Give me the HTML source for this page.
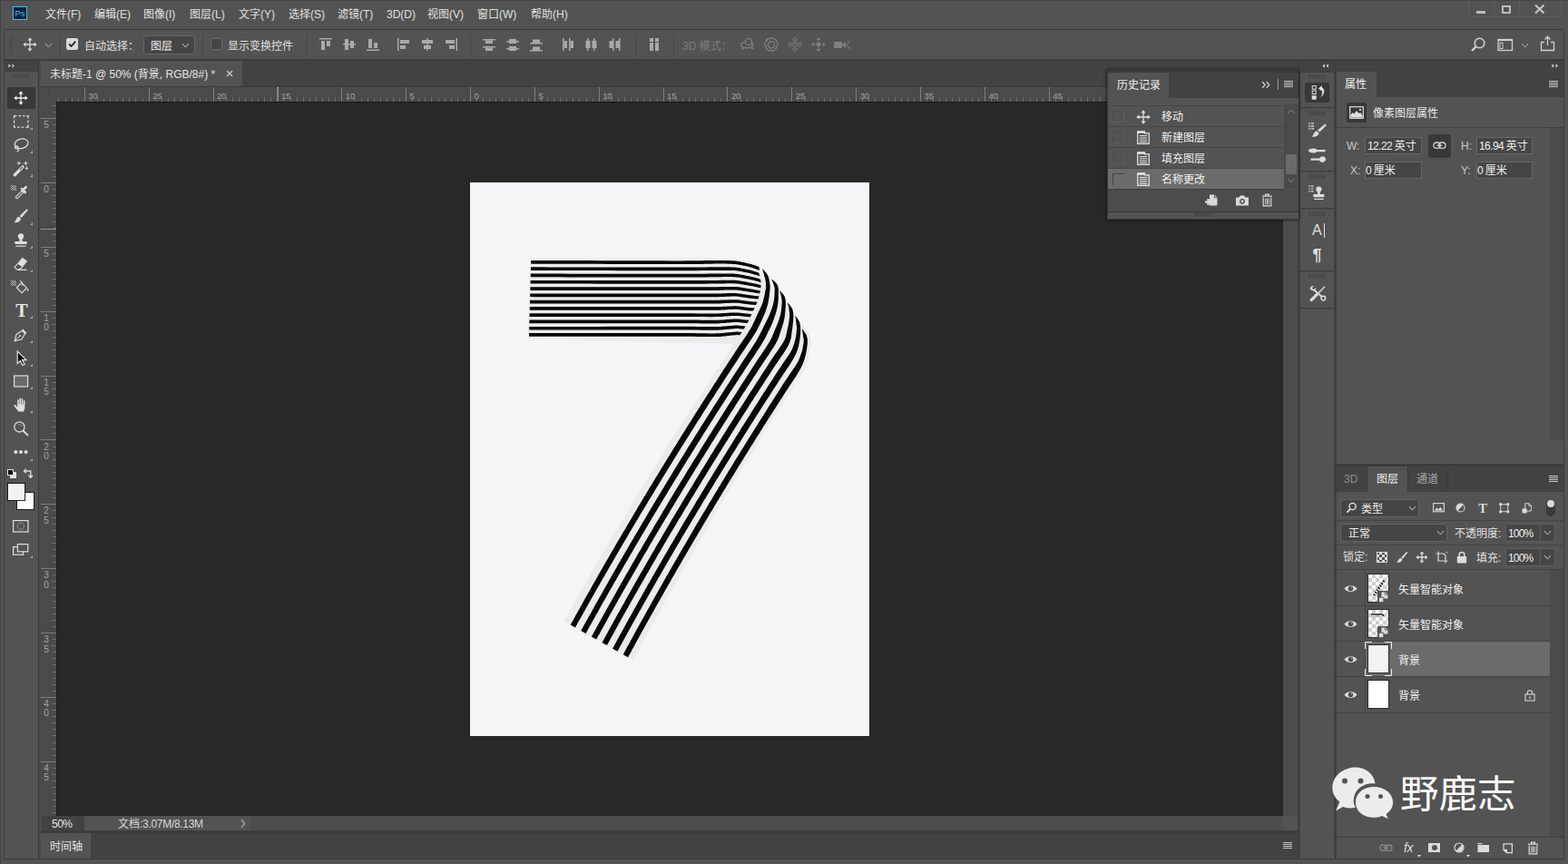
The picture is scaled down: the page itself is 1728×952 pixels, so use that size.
<!DOCTYPE html>
<html lang="zh-CN">
<head>
<meta charset="utf-8">
<title>未标题-1 @ 50% (背景, RGB/8#) *</title>
<style>
html,body{margin:0;padding:0;}
html{background:#535353;}
body{width:1728px;height:952px;position:relative;overflow:hidden;background:#535353;
 font-family:"Liberation Sans","Noto Sans CJK SC",sans-serif;font-size:12px;line-height:16px;color:#dcdcdc;}
.a{position:absolute;}
.t{position:absolute;white-space:nowrap;line-height:16px;height:16px;}
.dim{color:#8c8c8c;}
svg{position:absolute;overflow:visible;}
.mi{position:absolute;top:8px;height:16px;line-height:16px;white-space:nowrap;color:#e0e0e0;}
.inp{position:absolute;background:#454545;border:1px solid #666;box-sizing:border-box;}
.sep{position:absolute;background:#3d3d3d;width:1px;}
.hl{position:absolute;background:#3f3f3f;height:1px;}
</style>
</head>
<body>
<div class="a" style="left:5px;top:32px;width:1718px;height:1px;background:#3a3a3a;"></div>
<div class="a" style="left:5px;top:65px;width:1718px;height:2px;background:#3c3c3c;"></div>
<div class="a" style="left:0px;top:0px;width:1728px;height:1px;background:#454545;"></div>
<div class="a" style="left:0px;top:0px;width:1px;height:952px;background:#4a4040;"></div>
<div class="a" style="left:4px;top:33px;width:1px;height:914px;background:#3e3e3e;"></div>
<div class="a" style="left:5px;top:67px;width:37px;height:12px;background:#424242;"></div>
<div class="a" style="left:42px;top:67px;width:1px;height:880px;background:#3a3a3a;"></div>
<div class="a" style="left:43px;top:67px;width:2px;height:880px;background:#4b4b4b;"></div>
<div class="a" style="left:45px;top:67px;width:1388px;height:29px;background:#424242;"></div>
<div class="a" style="left:45px;top:67px;width:222px;height:28px;background:#535353;"></div>
<div class="a" style="left:45px;top:95px;width:1388px;height:1px;background:#3a3a3a;"></div>
<div class="a" style="left:45px;top:96px;width:1369px;height:16px;background:#4a4a4a;"></div>
<div class="a" style="left:45px;top:112px;width:17px;height:787px;background:#4a4a4a;"></div>
<div class="a" style="left:62px;top:112px;width:1352px;height:787px;background:#282828;"></div>
<div class="a" style="left:62px;top:112px;width:1352px;height:1px;background:#161616;"></div>
<div class="a" style="left:62px;top:112px;width:1px;height:787px;background:#1c1c1c;"></div>
<div class="a" style="left:1414px;top:96px;width:16px;height:803px;background:#4d4d4d;"></div>
<div class="a" style="left:45px;top:899px;width:1385px;height:17px;background:#4d4d4d;"></div>
<div class="a" style="left:46px;top:899px;width:47px;height:17px;background:#424242;"></div>
<div class="a" style="left:93px;top:899px;width:183px;height:17px;background:#535353;"></div>
<div class="a" style="left:1414px;top:899px;width:16px;height:17px;background:#535353;"></div>
<div class="a" style="left:45px;top:915px;width:1385px;height:3px;background:#3c3c3c;"></div>
<div class="a" style="left:45px;top:918px;width:1386px;height:28px;background:#424242;"></div>
<div class="a" style="left:45px;top:918px;width:55px;height:28px;background:#535353;"></div>
<div class="a" style="left:5px;top:946px;width:1718px;height:1px;background:#3a3a3a;"></div>
<div class="a" style="left:1430px;top:67px;width:1px;height:880px;background:#404040;"></div>
<div class="a" style="left:1431px;top:67px;width:1px;height:880px;background:#3a3a3a;"></div>
<div class="a" style="left:1432px;top:67px;width:1px;height:880px;background:#474747;"></div>
<div class="a" style="left:1433px;top:67px;width:290px;height:12px;background:#424242;"></div>
<div class="a" style="left:1433px;top:79px;width:37px;height:867px;background:#535353;"></div>
<div class="a" style="left:1470px;top:67px;width:1px;height:880px;background:#474747;"></div>
<div class="a" style="left:1471px;top:67px;width:1px;height:880px;background:#3a3a3a;"></div>
<div class="a" style="left:1472px;top:67px;width:1px;height:880px;background:#404040;"></div>
<div class="a" style="left:1473px;top:79px;width:250px;height:28px;background:#424242;"></div>
<div class="a" style="left:1473px;top:79px;width:44px;height:28px;background:#535353;"></div>
<div class="a" style="left:1473px;top:107px;width:250px;height:404px;background:#535353;"></div>
<div class="a" style="left:1473px;top:511px;width:250px;height:3px;background:#3c3c3c;"></div>
<div class="a" style="left:1473px;top:514px;width:250px;height:28px;background:#424242;"></div>
<div class="a" style="left:1473px;top:542px;width:250px;height:404px;background:#535353;"></div>
<div class="a" style="left:1723px;top:33px;width:1px;height:914px;background:#3e3e3e;"></div>
<div class="a" style="left:518px;top:201px;width:440px;height:610px;background:#f5f5f7;"></div>
<svg style="left:0;top:0" width="1728" height="952" viewBox="0 0 1728 952">
<g><path d="M584.2,284.6 L790,284.6 Q820,285.1 842,293.6 L846,380 L581.8,373.4 Z" fill="#ececed"/>
<path d="M585.2,290.7 L590.9,290.8 L598.3,290.8 L607.1,290.8 L617.0,290.8 L627.5,290.8 L638.5,290.8 L649.4,290.8 L660.0,290.8 L670.9,290.9 L682.6,290.9 L694.9,290.9 L707.3,291.0 L719.4,291.0 L730.8,291.0 L741.1,291.1 L750.0,291.0 L757.4,291.0 L763.7,291.0 L769.1,290.9 L773.7,290.9 L777.8,290.8 L781.4,290.7 L784.7,290.7 L788.0,290.6 L791.0,290.6 L793.5,290.6 L795.6,290.6 L797.3,290.6 L798.8,290.6 L800.2,290.6 L801.5,290.7 L802.9,290.7 L804.4,290.7 L805.6,290.8 L806.8,290.8 L807.8,290.9 L808.8,290.9 L809.8,291.0 L810.8,291.1 L811.8,291.2 L812.8,291.4 L813.8,291.5 L814.8,291.7 L815.7,291.9 L816.7,292.1 L817.7,292.3 L818.6,292.5 L819.6,292.7 L820.6,292.9 L821.6,293.1 L822.6,293.3 L823.5,293.5 L824.5,293.7 L825.4,293.9 L826.4,294.2 L827.5,294.5 L828.6,294.9 L829.9,295.3 L831.1,295.7 L832.4,296.2 L833.7,296.7 L835.0,297.2 L836.2,297.6 L837.4,298.1 L838.5,298.6 L839.6,299.1 L840.8,299.7 L841.9,300.2 L842.9,300.7 L843.9,301.2 L844.7,301.6 L845.3,301.9 L846.7,299.1 L846.1,298.8 L845.3,298.4 L844.4,297.9 L843.4,297.3 L842.2,296.8 L841.0,296.2 L839.8,295.6 L838.6,295.1 L837.5,294.6 L836.2,294.1 L834.9,293.6 L833.6,293.1 L832.3,292.6 L831.0,292.1 L829.7,291.7 L828.5,291.3 L827.4,291.0 L826.3,290.7 L825.2,290.4 L824.2,290.2 L823.3,289.9 L822.3,289.7 L821.3,289.5 L820.4,289.3 L819.4,289.1 L818.4,288.9 L817.4,288.7 L816.4,288.5 L815.4,288.3 L814.4,288.1 L813.3,287.9 L812.2,287.8 L811.2,287.6 L810.1,287.5 L809.1,287.4 L808.1,287.3 L807.0,287.3 L805.8,287.2 L804.5,287.2 L803.1,287.1 L801.6,287.1 L800.2,287.0 L798.9,287.0 L797.3,287.0 L795.6,287.0 L793.5,286.9 L791.0,286.9 L788.0,287.0 L784.7,287.0 L781.3,287.0 L777.7,287.1 L773.7,287.2 L769.0,287.2 L763.7,287.3 L757.4,287.3 L750.0,287.4 L741.1,287.4 L730.8,287.3 L719.4,287.3 L707.3,287.3 L694.9,287.2 L682.7,287.2 L670.9,287.2 L660.0,287.2 L649.4,287.1 L638.5,287.1 L627.6,287.1 L617.0,287.1 L607.1,287.1 L598.3,287.1 L590.9,287.1 L585.2,287.1Z" fill="#070707"/>
<path d="M585.0,298.0 L590.7,298.0 L598.1,298.0 L607.0,298.1 L616.9,298.1 L627.5,298.1 L638.4,298.1 L649.4,298.1 L660.0,298.1 L670.9,298.1 L682.7,298.2 L694.9,298.2 L707.3,298.2 L719.4,298.3 L730.8,298.3 L741.1,298.3 L750.0,298.3 L757.4,298.3 L763.7,298.2 L769.1,298.2 L773.7,298.1 L777.7,298.1 L781.4,298.0 L784.7,298.0 L788.0,298.0 L791.0,297.9 L793.5,297.9 L795.6,297.9 L797.3,297.9 L798.8,297.9 L800.2,297.9 L801.5,297.9 L803.0,297.9 L804.4,297.9 L805.6,297.9 L806.8,298.0 L807.8,298.0 L808.8,298.1 L809.8,298.1 L810.8,298.2 L811.8,298.3 L812.8,298.4 L813.8,298.6 L814.8,298.7 L815.7,298.9 L816.7,299.1 L817.7,299.3 L818.7,299.5 L819.7,299.7 L820.7,299.9 L821.6,300.1 L822.6,300.2 L823.5,300.4 L824.5,300.6 L825.5,300.8 L826.5,301.1 L827.6,301.4 L828.7,301.7 L829.9,302.0 L831.2,302.4 L832.5,302.8 L833.8,303.2 L835.1,303.6 L836.3,304.1 L837.4,304.5 L838.5,304.9 L839.7,305.4 L840.8,305.9 L841.9,306.4 L843.0,306.9 L843.9,307.3 L844.7,307.7 L845.3,308.0 L846.7,305.0 L846.1,304.8 L845.3,304.4 L844.4,304.0 L843.3,303.5 L842.2,302.9 L841.0,302.4 L839.8,301.9 L838.6,301.4 L837.4,301.0 L836.1,300.5 L834.8,300.1 L833.5,299.7 L832.2,299.2 L830.9,298.8 L829.6,298.5 L828.4,298.1 L827.3,297.8 L826.2,297.6 L825.2,297.3 L824.2,297.1 L823.2,296.9 L822.3,296.7 L821.3,296.5 L820.3,296.3 L819.3,296.1 L818.4,295.9 L817.4,295.7 L816.4,295.5 L815.4,295.3 L814.3,295.1 L813.3,295.0 L812.2,294.8 L811.1,294.7 L810.1,294.6 L809.1,294.5 L808.0,294.5 L806.9,294.4 L805.7,294.4 L804.5,294.3 L803.0,294.3 L801.6,294.3 L800.2,294.3 L798.8,294.2 L797.3,294.2 L795.6,294.2 L793.5,294.2 L791.0,294.2 L788.0,294.3 L784.7,294.3 L781.3,294.3 L777.7,294.4 L773.7,294.4 L769.1,294.5 L763.7,294.5 L757.4,294.6 L750.0,294.6 L741.1,294.6 L730.8,294.6 L719.4,294.6 L707.3,294.5 L694.9,294.5 L682.7,294.5 L670.9,294.4 L660.0,294.4 L649.4,294.4 L638.4,294.4 L627.5,294.4 L616.9,294.4 L607.0,294.4 L598.1,294.3 L590.7,294.3 L585.0,294.3Z" fill="#070707"/>
<path d="M584.8,305.3 L590.5,305.3 L598.0,305.3 L606.8,305.3 L616.8,305.3 L627.4,305.4 L638.4,305.4 L649.4,305.4 L660.0,305.4 L670.9,305.4 L682.7,305.4 L694.9,305.5 L707.3,305.5 L719.4,305.5 L730.8,305.5 L741.1,305.5 L750.0,305.5 L757.4,305.5 L763.7,305.5 L769.1,305.5 L773.7,305.4 L777.7,305.4 L781.4,305.3 L784.7,305.3 L788.0,305.3 L791.0,305.2 L793.5,305.2 L795.6,305.2 L797.3,305.1 L798.8,305.1 L800.2,305.1 L801.6,305.1 L803.0,305.1 L804.4,305.1 L805.7,305.1 L806.8,305.1 L807.9,305.2 L808.9,305.2 L809.8,305.2 L810.8,305.3 L811.8,305.4 L812.8,305.5 L813.8,305.6 L814.8,305.8 L815.8,306.0 L816.7,306.1 L817.7,306.3 L818.7,306.5 L819.7,306.7 L820.7,306.9 L821.6,307.0 L822.6,307.2 L823.6,307.4 L824.5,307.6 L825.5,307.8 L826.5,308.0 L827.6,308.2 L828.8,308.5 L830.0,308.8 L831.3,309.1 L832.6,309.5 L833.9,309.8 L835.1,310.1 L836.4,310.5 L837.5,310.9 L838.6,311.2 L839.7,311.7 L840.9,312.1 L842.0,312.6 L843.0,313.0 L844.0,313.4 L844.8,313.7 L845.4,314.0 L846.6,311.0 L846.0,310.8 L845.2,310.4 L844.3,310.0 L843.2,309.6 L842.1,309.1 L840.9,308.6 L839.7,308.2 L838.5,307.7 L837.3,307.4 L836.1,307.0 L834.7,306.6 L833.4,306.2 L832.1,305.9 L830.8,305.6 L829.6,305.3 L828.4,305.0 L827.3,304.7 L826.2,304.5 L825.2,304.2 L824.2,304.0 L823.2,303.9 L822.3,303.7 L821.3,303.5 L820.3,303.3 L819.3,303.1 L818.3,302.9 L817.4,302.7 L816.4,302.5 L815.4,302.4 L814.3,302.2 L813.3,302.0 L812.2,301.9 L811.1,301.8 L810.1,301.7 L809.1,301.7 L808.0,301.6 L806.9,301.6 L805.7,301.6 L804.4,301.5 L803.0,301.5 L801.6,301.5 L800.2,301.5 L798.8,301.5 L797.3,301.5 L795.6,301.5 L793.5,301.5 L791.0,301.5 L788.0,301.6 L784.7,301.6 L781.3,301.6 L777.7,301.7 L773.7,301.7 L769.1,301.8 L763.7,301.8 L757.4,301.8 L750.0,301.8 L741.1,301.8 L730.8,301.8 L719.4,301.8 L707.3,301.8 L695.0,301.8 L682.7,301.7 L670.9,301.7 L660.0,301.7 L649.4,301.7 L638.4,301.7 L627.4,301.7 L616.8,301.6 L606.8,301.6 L598.0,301.6 L590.5,301.6 L584.8,301.6Z" fill="#070707"/>
<path d="M584.6,312.6 L590.3,312.6 L597.8,312.6 L606.7,312.6 L616.7,312.6 L627.3,312.6 L638.4,312.6 L649.4,312.6 L660.0,312.7 L670.9,312.7 L682.7,312.7 L695.0,312.7 L707.3,312.7 L719.4,312.7 L730.8,312.8 L741.1,312.8 L750.0,312.8 L757.4,312.8 L763.7,312.7 L769.1,312.7 L773.7,312.7 L777.7,312.7 L781.4,312.6 L784.7,312.6 L788.0,312.6 L791.0,312.5 L793.5,312.5 L795.6,312.5 L797.4,312.4 L798.9,312.4 L800.2,312.3 L801.6,312.3 L803.0,312.3 L804.4,312.3 L805.7,312.3 L806.8,312.3 L807.9,312.3 L808.9,312.3 L809.9,312.4 L810.8,312.4 L811.8,312.5 L812.8,312.6 L813.8,312.7 L814.8,312.8 L815.8,313.0 L816.7,313.2 L817.7,313.3 L818.7,313.5 L819.7,313.7 L820.7,313.9 L821.7,314.0 L822.6,314.2 L823.6,314.3 L824.5,314.5 L825.5,314.7 L826.6,314.9 L827.7,315.1 L828.8,315.3 L830.1,315.6 L831.4,315.8 L832.7,316.1 L834.0,316.4 L835.2,316.6 L836.4,316.9 L837.6,317.2 L838.7,317.5 L839.8,317.9 L840.9,318.3 L842.1,318.7 L843.1,319.1 L844.0,319.5 L844.8,319.8 L845.4,320.0 L846.6,317.0 L846.0,316.8 L845.2,316.5 L844.2,316.1 L843.2,315.7 L842.0,315.3 L840.9,314.8 L839.6,314.4 L838.4,314.1 L837.2,313.7 L836.0,313.4 L834.7,313.1 L833.3,312.8 L832.0,312.6 L830.7,312.3 L829.5,312.0 L828.3,311.8 L827.2,311.6 L826.2,311.4 L825.2,311.2 L824.2,311.0 L823.2,310.8 L822.2,310.6 L821.3,310.5 L820.3,310.3 L819.3,310.1 L818.3,310.0 L817.4,309.8 L816.4,309.6 L815.3,309.4 L814.3,309.3 L813.2,309.1 L812.2,309.0 L811.1,308.9 L810.1,308.8 L809.0,308.8 L808.0,308.8 L806.9,308.7 L805.7,308.7 L804.4,308.7 L803.0,308.7 L801.6,308.7 L800.2,308.7 L798.8,308.7 L797.3,308.8 L795.5,308.8 L793.5,308.8 L791.0,308.9 L788.0,308.9 L784.7,308.9 L781.3,308.9 L777.7,309.0 L773.7,309.0 L769.1,309.0 L763.7,309.0 L757.4,309.1 L750.0,309.1 L741.1,309.1 L730.8,309.1 L719.4,309.0 L707.3,309.0 L695.0,309.0 L682.7,309.0 L670.9,309.0 L660.0,309.0 L649.4,308.9 L638.4,308.9 L627.3,308.9 L616.7,308.9 L606.7,308.9 L597.8,308.9 L590.3,308.9 L584.6,308.9Z" fill="#070707"/>
<path d="M584.4,319.9 L590.1,319.9 L597.6,319.9 L606.6,319.9 L616.6,319.9 L627.3,319.9 L638.3,319.9 L649.3,319.9 L660.0,319.9 L670.9,319.9 L682.7,320.0 L695.0,320.0 L707.3,320.0 L719.4,320.0 L730.8,320.0 L741.1,320.0 L750.0,320.0 L757.4,320.0 L763.7,320.0 L769.1,320.0 L773.7,320.0 L777.7,320.0 L781.3,319.9 L784.7,319.9 L788.0,319.9 L791.0,319.9 L793.5,319.8 L795.6,319.7 L797.4,319.7 L798.9,319.6 L800.3,319.6 L801.6,319.5 L803.0,319.5 L804.4,319.5 L805.7,319.5 L806.9,319.4 L807.9,319.4 L808.9,319.4 L809.9,319.5 L810.9,319.5 L811.9,319.6 L812.9,319.7 L813.8,319.8 L814.8,319.9 L815.8,320.0 L816.8,320.2 L817.7,320.4 L818.7,320.5 L819.7,320.7 L820.7,320.8 L821.7,321.0 L822.6,321.1 L823.6,321.3 L824.6,321.4 L825.6,321.6 L826.6,321.8 L827.7,322.0 L828.9,322.1 L830.2,322.3 L831.4,322.5 L832.7,322.7 L834.0,322.9 L835.3,323.1 L836.5,323.4 L837.6,323.6 L838.7,323.9 L839.9,324.2 L841.0,324.5 L842.1,324.9 L843.2,325.2 L844.1,325.6 L844.9,325.8 L845.5,326.0 L846.5,323.0 L845.9,322.8 L845.1,322.5 L844.2,322.2 L843.1,321.8 L842.0,321.4 L840.8,321.1 L839.6,320.7 L838.4,320.4 L837.2,320.1 L835.9,319.9 L834.6,319.7 L833.3,319.4 L831.9,319.2 L830.7,319.0 L829.4,318.8 L828.3,318.6 L827.2,318.5 L826.1,318.3 L825.1,318.1 L824.1,317.9 L823.2,317.8 L822.2,317.6 L821.3,317.5 L820.3,317.3 L819.3,317.1 L818.3,317.0 L817.3,316.8 L816.3,316.6 L815.3,316.5 L814.3,316.3 L813.2,316.2 L812.1,316.1 L811.1,316.0 L810.0,315.9 L809.0,315.9 L807.9,315.9 L806.9,315.9 L805.7,315.9 L804.4,315.9 L803.0,315.9 L801.5,315.9 L800.2,316.0 L798.8,316.0 L797.3,316.0 L795.5,316.1 L793.5,316.1 L791.0,316.2 L788.0,316.2 L784.7,316.2 L781.3,316.2 L777.7,316.3 L773.7,316.3 L769.1,316.3 L763.7,316.3 L757.4,316.3 L750.0,316.3 L741.1,316.3 L730.8,316.3 L719.4,316.3 L707.4,316.3 L695.0,316.3 L682.7,316.3 L670.9,316.2 L660.0,316.2 L649.3,316.2 L638.3,316.2 L627.3,316.2 L616.6,316.2 L606.6,316.2 L597.6,316.2 L590.1,316.2 L584.4,316.2Z" fill="#070707"/>
<path d="M584.2,327.1 L589.9,327.2 L597.5,327.2 L606.4,327.2 L616.5,327.2 L627.2,327.2 L638.3,327.2 L649.3,327.2 L660.0,327.2 L670.9,327.2 L682.7,327.2 L695.0,327.2 L707.4,327.2 L719.4,327.2 L730.8,327.2 L741.1,327.2 L750.0,327.2 L757.4,327.3 L763.7,327.3 L769.1,327.3 L773.7,327.3 L777.7,327.3 L781.3,327.2 L784.7,327.2 L788.0,327.2 L791.0,327.2 L793.6,327.1 L795.6,327.0 L797.4,326.9 L798.9,326.9 L800.3,326.8 L801.6,326.7 L803.0,326.7 L804.5,326.7 L805.7,326.6 L806.9,326.6 L808.0,326.6 L809.0,326.6 L809.9,326.6 L810.9,326.6 L811.9,326.6 L812.9,326.7 L813.9,326.8 L814.8,327.0 L815.8,327.1 L816.8,327.2 L817.7,327.4 L818.7,327.6 L819.8,327.7 L820.7,327.8 L821.7,328.0 L822.7,328.1 L823.6,328.2 L824.6,328.4 L825.6,328.5 L826.7,328.7 L827.8,328.8 L829.0,329.0 L830.2,329.1 L831.5,329.2 L832.8,329.3 L834.1,329.5 L835.4,329.6 L836.6,329.8 L837.7,330.0 L838.8,330.2 L839.9,330.4 L841.1,330.7 L842.2,331.1 L843.2,331.4 L844.1,331.6 L844.9,331.9 L845.6,332.0 L846.4,329.0 L845.8,328.8 L845.1,328.6 L844.1,328.3 L843.1,327.9 L841.9,327.6 L840.7,327.3 L839.5,327.0 L838.3,326.7 L837.1,326.5 L835.8,326.3 L834.5,326.2 L833.2,326.0 L831.9,325.9 L830.6,325.8 L829.4,325.6 L828.2,325.5 L827.1,325.3 L826.1,325.2 L825.1,325.0 L824.1,324.9 L823.2,324.7 L822.2,324.6 L821.2,324.4 L820.2,324.3 L819.3,324.2 L818.3,324.0 L817.3,323.8 L816.3,323.7 L815.3,323.5 L814.3,323.4 L813.2,323.2 L812.1,323.2 L811.0,323.1 L810.0,323.1 L809.0,323.0 L807.9,323.0 L806.8,323.0 L805.7,323.1 L804.4,323.1 L803.0,323.1 L801.5,323.1 L800.1,323.2 L798.7,323.2 L797.2,323.3 L795.5,323.4 L793.5,323.4 L791.0,323.5 L788.0,323.5 L784.7,323.5 L781.3,323.5 L777.7,323.6 L773.7,323.6 L769.1,323.6 L763.7,323.6 L757.4,323.6 L750.0,323.6 L741.1,323.5 L730.8,323.5 L719.4,323.5 L707.4,323.5 L695.0,323.5 L682.7,323.5 L670.9,323.5 L660.0,323.5 L649.3,323.5 L638.3,323.5 L627.2,323.5 L616.5,323.5 L606.5,323.5 L597.5,323.5 L590.0,323.5 L584.2,323.5Z" fill="#070707"/>
<path d="M584.0,334.4 L589.8,334.4 L597.3,334.4 L606.3,334.4 L616.4,334.4 L627.1,334.5 L638.2,334.5 L649.3,334.5 L660.0,334.5 L670.9,334.5 L682.7,334.5 L695.0,334.5 L707.4,334.5 L719.4,334.5 L730.8,334.5 L741.1,334.5 L750.0,334.5 L757.4,334.5 L763.7,334.5 L769.1,334.5 L773.7,334.5 L777.7,334.5 L781.3,334.5 L784.7,334.5 L788.0,334.5 L791.1,334.5 L793.6,334.4 L795.7,334.3 L797.4,334.2 L798.9,334.1 L800.3,334.0 L801.6,333.9 L803.1,333.9 L804.5,333.8 L805.8,333.8 L806.9,333.7 L808.0,333.7 L809.0,333.7 L809.9,333.7 L810.9,333.7 L811.9,333.7 L812.9,333.8 L813.9,333.9 L814.8,334.0 L815.8,334.1 L816.8,334.3 L817.8,334.4 L818.8,334.6 L819.8,334.7 L820.8,334.8 L821.7,335.0 L822.7,335.1 L823.7,335.2 L824.6,335.3 L825.7,335.4 L826.7,335.6 L827.8,335.7 L829.0,335.8 L830.3,335.8 L831.6,335.9 L832.9,336.0 L834.2,336.0 L835.5,336.1 L836.7,336.2 L837.8,336.3 L838.9,336.5 L840.0,336.7 L841.1,337.0 L842.2,337.2 L843.3,337.5 L844.2,337.7 L845.0,337.9 L845.6,338.1 L846.4,334.9 L845.8,334.8 L845.0,334.6 L844.1,334.3 L843.0,334.1 L841.9,333.8 L840.7,333.5 L839.4,333.3 L838.2,333.1 L837.0,332.9 L835.7,332.8 L834.4,332.7 L833.1,332.6 L831.8,332.6 L830.5,332.5 L829.3,332.4 L828.2,332.3 L827.1,332.2 L826.1,332.1 L825.1,332.0 L824.1,331.8 L823.1,331.7 L822.2,331.6 L821.2,331.4 L820.2,331.3 L819.2,331.2 L818.3,331.0 L817.3,330.9 L816.3,330.7 L815.3,330.6 L814.3,330.4 L813.2,330.3 L812.1,330.2 L811.0,330.2 L810.0,330.2 L808.9,330.2 L807.9,330.2 L806.8,330.2 L805.6,330.2 L804.4,330.3 L802.9,330.3 L801.5,330.4 L800.1,330.4 L798.7,330.5 L797.2,330.6 L795.5,330.6 L793.5,330.7 L791.0,330.8 L788.0,330.8 L784.7,330.8 L781.3,330.8 L777.7,330.8 L773.7,330.8 L769.1,330.8 L763.7,330.8 L757.4,330.8 L750.0,330.8 L741.1,330.8 L730.8,330.8 L719.4,330.8 L707.4,330.8 L695.0,330.8 L682.7,330.8 L670.9,330.8 L660.0,330.8 L649.3,330.8 L638.2,330.8 L627.1,330.8 L616.4,330.7 L606.3,330.7 L597.3,330.7 L589.8,330.7 L584.0,330.7Z" fill="#070707"/>
<path d="M583.8,341.7 L589.6,341.7 L597.2,341.7 L606.2,341.7 L616.3,341.7 L627.1,341.7 L638.2,341.7 L649.3,341.7 L660.0,341.7 L670.9,341.7 L682.7,341.7 L695.0,341.7 L707.4,341.7 L719.5,341.7 L730.8,341.7 L741.1,341.7 L750.0,341.7 L757.4,341.7 L763.7,341.8 L769.1,341.8 L773.7,341.8 L777.7,341.8 L781.3,341.8 L784.7,341.8 L788.0,341.8 L791.1,341.8 L793.6,341.7 L795.7,341.6 L797.4,341.5 L799.0,341.4 L800.3,341.3 L801.7,341.2 L803.1,341.1 L804.5,341.0 L805.8,341.0 L806.9,340.9 L808.0,340.8 L809.0,340.8 L810.0,340.8 L810.9,340.8 L811.9,340.8 L812.9,340.9 L813.9,340.9 L814.9,341.1 L815.8,341.2 L816.8,341.3 L817.8,341.5 L818.8,341.6 L819.8,341.7 L820.8,341.8 L821.7,341.9 L822.7,342.0 L823.7,342.2 L824.7,342.3 L825.7,342.4 L826.8,342.5 L827.9,342.5 L829.1,342.6 L830.4,342.6 L831.7,342.6 L833.0,342.6 L834.3,342.6 L835.6,342.6 L836.7,342.6 L837.9,342.7 L838.9,342.8 L840.1,343.0 L841.2,343.2 L842.3,343.4 L843.3,343.6 L844.3,343.8 L845.1,343.9 L845.7,344.1 L846.3,340.9 L845.7,340.8 L844.9,340.6 L844.0,340.4 L842.9,340.2 L841.8,340.0 L840.6,339.8 L839.4,339.6 L838.1,339.4 L836.9,339.3 L835.6,339.3 L834.3,339.3 L833.0,339.3 L831.7,339.3 L830.4,339.2 L829.2,339.2 L828.1,339.2 L827.0,339.1 L826.0,339.0 L825.0,338.9 L824.1,338.8 L823.1,338.7 L822.2,338.5 L821.2,338.4 L820.2,338.3 L819.2,338.2 L818.3,338.0 L817.3,337.9 L816.3,337.7 L815.3,337.6 L814.2,337.5 L813.2,337.4 L812.1,337.3 L811.0,337.3 L809.9,337.3 L808.9,337.3 L807.9,337.3 L806.8,337.4 L805.6,337.4 L804.3,337.5 L802.9,337.5 L801.5,337.6 L800.1,337.7 L798.7,337.7 L797.2,337.8 L795.5,337.9 L793.4,338.0 L791.0,338.1 L788.0,338.1 L784.7,338.1 L781.3,338.1 L777.7,338.1 L773.7,338.1 L769.1,338.1 L763.7,338.1 L757.4,338.0 L750.0,338.0 L741.1,338.0 L730.8,338.0 L719.5,338.0 L707.4,338.0 L695.0,338.0 L682.7,338.0 L670.9,338.0 L660.0,338.0 L649.3,338.0 L638.2,338.0 L627.1,338.0 L616.3,338.0 L606.2,338.0 L597.2,338.0 L589.6,338.0 L583.8,338.0Z" fill="#070707"/>
<path d="M583.6,349.0 L589.4,349.0 L597.0,349.0 L606.1,349.0 L616.2,349.0 L627.0,349.0 L638.2,349.0 L649.3,349.0 L660.0,349.0 L671.0,349.0 L682.8,349.0 L695.0,349.0 L707.4,349.0 L719.5,349.0 L730.8,349.0 L741.1,349.0 L750.0,349.0 L757.4,349.0 L763.7,349.0 L769.1,349.1 L773.7,349.1 L777.7,349.1 L781.3,349.2 L784.7,349.2 L788.0,349.1 L791.1,349.1 L793.6,349.0 L795.7,348.9 L797.4,348.7 L799.0,348.6 L800.4,348.5 L801.7,348.4 L803.1,348.3 L804.5,348.2 L805.8,348.1 L807.0,348.1 L808.0,348.0 L809.0,347.9 L810.0,347.9 L811.0,347.9 L811.9,347.9 L812.9,347.9 L813.9,348.0 L814.9,348.1 L815.8,348.2 L816.8,348.3 L817.8,348.5 L818.8,348.6 L819.8,348.7 L820.8,348.8 L821.8,348.9 L822.7,349.0 L823.7,349.1 L824.7,349.2 L825.7,349.3 L826.8,349.3 L828.0,349.4 L829.2,349.4 L830.5,349.3 L831.8,349.3 L833.1,349.2 L834.4,349.1 L835.6,349.0 L836.8,349.0 L837.9,349.0 L839.0,349.1 L840.1,349.2 L841.3,349.4 L842.4,349.5 L843.4,349.7 L844.3,349.9 L845.1,350.0 L845.8,350.1 L846.2,346.9 L845.7,346.8 L844.9,346.7 L843.9,346.5 L842.9,346.3 L841.7,346.2 L840.5,346.0 L839.3,345.9 L838.1,345.8 L836.8,345.7 L835.5,345.8 L834.2,345.8 L832.9,345.9 L831.6,345.9 L830.3,346.0 L829.1,346.0 L828.0,346.0 L827.0,346.0 L826.0,345.9 L825.0,345.8 L824.0,345.7 L823.1,345.6 L822.1,345.5 L821.2,345.4 L820.2,345.3 L819.2,345.2 L818.2,345.1 L817.3,344.9 L816.3,344.8 L815.3,344.7 L814.2,344.5 L813.2,344.4 L812.1,344.4 L811.0,344.4 L809.9,344.4 L808.9,344.4 L807.8,344.5 L806.8,344.5 L805.6,344.6 L804.3,344.6 L802.9,344.7 L801.4,344.8 L800.1,344.9 L798.7,345.0 L797.2,345.1 L795.5,345.2 L793.4,345.3 L791.0,345.4 L788.0,345.4 L784.7,345.5 L781.3,345.5 L777.7,345.4 L773.7,345.4 L769.1,345.4 L763.7,345.3 L757.4,345.3 L750.0,345.3 L741.1,345.3 L730.8,345.3 L719.5,345.3 L707.4,345.3 L695.0,345.3 L682.8,345.3 L671.0,345.3 L660.0,345.3 L649.3,345.3 L638.2,345.3 L627.0,345.3 L616.2,345.3 L606.1,345.3 L597.0,345.3 L589.4,345.3 L583.6,345.3Z" fill="#070707"/>
<path d="M583.4,356.3 L589.2,356.3 L596.8,356.3 L605.9,356.3 L616.1,356.3 L626.9,356.3 L638.1,356.3 L649.3,356.3 L660.0,356.3 L671.0,356.3 L682.8,356.3 L695.1,356.2 L707.4,356.2 L719.5,356.2 L730.8,356.2 L741.1,356.2 L750.0,356.2 L757.4,356.2 L763.7,356.3 L769.1,356.3 L773.7,356.4 L777.7,356.4 L781.3,356.5 L784.7,356.5 L788.0,356.4 L791.1,356.4 L793.6,356.3 L795.7,356.1 L797.5,356.0 L799.0,355.9 L800.4,355.7 L801.7,355.6 L803.1,355.5 L804.5,355.4 L805.8,355.3 L807.0,355.2 L808.1,355.1 L809.1,355.1 L810.0,355.0 L811.0,355.0 L812.0,355.0 L813.0,355.0 L813.9,355.1 L814.9,355.2 L815.9,355.3 L816.8,355.4 L817.8,355.5 L818.8,355.6 L819.8,355.7 L820.8,355.8 L821.8,355.9 L822.7,356.0 L823.7,356.1 L824.7,356.1 L825.8,356.2 L826.9,356.2 L828.0,356.2 L829.3,356.2 L830.6,356.1 L831.9,355.9 L833.2,355.8 L834.5,355.6 L835.7,355.5 L836.9,355.4 L838.0,355.4 L839.1,355.4 L840.2,355.5 L841.3,355.6 L842.4,355.7 L843.5,355.8 L844.4,355.9 L845.2,356.0 L845.8,356.1 L846.2,352.9 L845.6,352.8 L844.8,352.7 L843.9,352.6 L842.8,352.5 L841.7,352.3 L840.4,352.2 L839.2,352.1 L838.0,352.1 L836.7,352.1 L835.5,352.2 L834.1,352.4 L832.8,352.5 L831.5,352.6 L830.3,352.7 L829.1,352.8 L828.0,352.9 L826.9,352.9 L825.9,352.8 L825.0,352.8 L824.0,352.7 L823.1,352.6 L822.1,352.5 L821.1,352.4 L820.2,352.3 L819.2,352.2 L818.2,352.1 L817.3,352.0 L816.3,351.8 L815.3,351.7 L814.2,351.6 L813.1,351.5 L812.0,351.5 L810.9,351.5 L809.9,351.5 L808.9,351.5 L807.8,351.6 L806.7,351.7 L805.6,351.7 L804.3,351.8 L802.9,351.9 L801.4,352.0 L800.0,352.1 L798.7,352.3 L797.2,352.4 L795.5,352.5 L793.4,352.6 L791.0,352.7 L788.0,352.7 L784.7,352.8 L781.3,352.8 L777.7,352.7 L773.7,352.7 L769.1,352.6 L763.7,352.6 L757.4,352.5 L750.0,352.5 L741.1,352.5 L730.8,352.5 L719.5,352.5 L707.4,352.5 L695.1,352.5 L682.8,352.6 L671.0,352.6 L660.0,352.6 L649.3,352.6 L638.1,352.6 L626.9,352.6 L616.1,352.6 L605.9,352.6 L596.9,352.6 L589.2,352.6 L583.4,352.6Z" fill="#070707"/>
<path d="M583.2,363.5 L589.0,363.6 L596.7,363.6 L605.8,363.6 L616.0,363.6 L626.9,363.6 L638.1,363.6 L649.2,363.6 L660.0,363.5 L671.0,363.5 L682.8,363.5 L695.1,363.5 L707.4,363.5 L719.5,363.5 L730.8,363.4 L741.1,363.4 L750.0,363.4 L757.4,363.5 L763.7,363.5 L769.0,363.6 L773.7,363.7 L777.7,363.7 L781.3,363.8 L784.7,363.8 L788.0,363.7 L791.1,363.7 L793.6,363.6 L795.7,363.4 L797.5,363.3 L799.0,363.1 L800.4,362.9 L801.7,362.8 L803.1,362.7 L804.6,362.6 L805.8,362.5 L807.0,362.4 L808.1,362.3 L809.1,362.2 L810.1,362.1 L811.0,362.1 L812.0,362.1 L813.0,362.1 L813.9,362.1 L814.9,362.2 L815.9,362.3 L816.8,362.4 L817.8,362.5 L818.8,362.6 L819.9,362.7 L820.8,362.8 L821.8,362.9 L822.8,362.9 L823.8,363.0 L824.8,363.1 L825.8,363.1 L826.9,363.1 L828.1,363.1 L829.3,363.0 L830.6,362.8 L831.9,362.6 L833.3,362.4 L834.6,362.2 L835.8,362.0 L837.0,361.8 L838.1,361.7 L839.2,361.7 L840.3,361.7 L841.4,361.8 L842.5,361.8 L843.5,361.9 L844.5,362.0 L845.3,362.1 L845.9,362.1 L846.1,358.9 L845.5,358.9 L844.8,358.8 L843.8,358.7 L842.7,358.6 L841.6,358.5 L840.4,358.5 L839.1,358.4 L837.9,358.5 L836.7,358.6 L835.4,358.7 L834.1,358.9 L832.7,359.1 L831.4,359.3 L830.2,359.5 L829.0,359.6 L827.9,359.7 L826.9,359.7 L825.9,359.7 L824.9,359.7 L824.0,359.6 L823.1,359.5 L822.1,359.5 L821.1,359.4 L820.1,359.3 L819.2,359.2 L818.2,359.1 L817.2,359.0 L816.3,358.9 L815.2,358.8 L814.2,358.7 L813.1,358.6 L812.0,358.5 L810.9,358.6 L809.9,358.6 L808.8,358.7 L807.8,358.7 L806.7,358.8 L805.5,358.9 L804.3,359.0 L802.9,359.1 L801.4,359.2 L800.0,359.4 L798.6,359.5 L797.1,359.6 L795.4,359.8 L793.4,359.9 L791.0,360.0 L788.0,360.1 L784.7,360.1 L781.4,360.1 L777.7,360.0 L773.7,360.0 L769.1,359.9 L763.7,359.8 L757.4,359.8 L750.0,359.8 L741.1,359.7 L730.8,359.7 L719.5,359.8 L707.4,359.8 L695.1,359.8 L682.8,359.8 L671.0,359.8 L660.0,359.9 L649.2,359.9 L638.1,359.9 L626.9,359.9 L616.0,359.9 L605.8,359.9 L596.7,359.9 L589.0,359.9 L583.2,359.9Z" fill="#070707"/>
<path d="M583.0,370.8 L588.9,370.8 L596.5,370.8 L605.7,370.8 L615.9,370.8 L626.8,370.8 L638.0,370.8 L649.2,370.8 L660.0,370.8 L671.0,370.8 L682.8,370.8 L695.1,370.8 L707.4,370.7 L719.5,370.7 L730.9,370.7 L741.1,370.7 L750.0,370.7 L757.4,370.7 L763.7,370.8 L769.0,370.9 L773.7,370.9 L777.7,371.0 L781.3,371.1 L784.7,371.1 L788.0,371.1 L791.1,371.0 L793.6,370.9 L795.7,370.7 L797.5,370.5 L799.0,370.4 L800.4,370.2 L801.8,370.0 L803.2,369.9 L804.6,369.8 L805.9,369.6 L807.0,369.5 L808.1,369.4 L809.1,369.3 L810.1,369.2 L811.0,369.2 L812.0,369.1 L813.0,369.1 L814.0,369.2 L814.9,369.3 L815.9,369.4 L816.9,369.5 L817.9,369.6 L818.9,369.6 L819.9,369.7 L820.9,369.8 L821.8,369.8 L822.8,369.9 L823.8,370.0 L824.8,370.0 L825.9,370.0 L827.0,370.0 L828.2,369.9 L829.4,369.8 L830.7,369.5 L832.0,369.3 L833.3,369.0 L834.6,368.7 L835.9,368.4 L837.1,368.2 L838.2,368.1 L839.2,368.0 L840.4,368.0 L841.5,368.0 L842.6,368.0 L843.6,368.0 L844.5,368.1 L845.3,368.1 L846.0,368.1 L846.0,364.9 L845.5,364.9 L844.7,364.8 L843.7,364.8 L842.7,364.7 L841.5,364.7 L840.3,364.7 L839.1,364.7 L837.8,364.8 L836.6,365.0 L835.3,365.2 L834.0,365.5 L832.7,365.7 L831.4,366.0 L830.1,366.3 L828.9,366.5 L827.8,366.6 L826.8,366.6 L825.9,366.7 L824.9,366.6 L824.0,366.6 L823.0,366.5 L822.1,366.4 L821.1,366.4 L820.1,366.3 L819.1,366.2 L818.2,366.1 L817.2,366.0 L816.2,365.9 L815.2,365.8 L814.2,365.7 L813.1,365.6 L812.0,365.6 L810.9,365.6 L809.8,365.7 L808.8,365.8 L807.8,365.9 L806.7,366.0 L805.5,366.1 L804.3,366.2 L802.8,366.3 L801.4,366.4 L800.0,366.6 L798.6,366.8 L797.1,366.9 L795.4,367.1 L793.4,367.2 L791.0,367.3 L788.0,367.4 L784.7,367.4 L781.4,367.4 L777.7,367.3 L773.7,367.2 L769.1,367.2 L763.7,367.1 L757.4,367.0 L750.0,367.0 L741.1,367.0 L730.8,367.0 L719.5,367.0 L707.4,367.0 L695.1,367.1 L682.8,367.1 L671.0,367.1 L660.0,367.1 L649.2,367.1 L638.0,367.1 L626.8,367.1 L615.9,367.1 L605.7,367.1 L596.5,367.1 L588.9,367.1 L583.0,367.1Z" fill="#070707"/>
</g>
<path d="M835,278 L836.9,296.4 L838.5,304 L839.0,312 L838.4,320 L836.6,327.5 L834,334.2 L831.3,341 L827.5,350 L822,360 L816,370 L812,377 L812,384 L870,384 L870,278Z" fill="#f5f5f7"/>
<path d="M835.8,298.8 L835.9,299.5 L836.2,300.3 L836.4,301.2 L836.7,302.1 L837.0,303.2 L837.2,304.2 L837.4,305.2 L837.6,306.2 L837.8,306.9 L838.0,307.4 L838.1,308.0 L838.2,308.5 L838.3,309.1 L838.4,309.7 L838.5,310.3 L838.6,311.0 L838.6,311.6 L838.6,312.3 L838.7,313.0 L838.7,313.7 L838.7,314.3 L838.7,314.9 L838.7,315.3 L838.7,315.7 L838.7,316.0 L838.6,316.3 L838.6,316.7 L838.5,317.3 L838.4,318.0 L838.2,318.9 L838.0,320.1 L837.7,321.3 L837.4,322.7 L837.1,324.1 L836.8,325.6 L836.4,327.0 L836.1,328.5 L835.7,329.9 L835.2,331.2 L834.8,332.5 L834.3,333.7 L833.8,335.0 L833.2,336.2 L832.6,337.6 L831.9,338.9 L831.2,340.3 L830.5,341.7 L829.8,343.1 L829.1,344.6 L828.4,346.1 L827.7,347.6 L827.1,349.1 L826.4,350.4 L825.8,351.7 L825.2,353.0 L824.6,354.3 L823.9,355.6 L823.1,357.0 L822.3,358.5 L821.3,360.1 L820.2,361.9 L819.0,363.8 L817.6,365.9 L816.2,368.0 L814.7,370.2 L813.1,372.5 L811.5,374.8 L810.0,377.1 L808.4,379.4 L806.9,381.7 L805.4,383.9 L803.9,386.1 L802.5,388.3 L801.0,390.5 L799.6,392.7 L798.1,394.9 L796.7,397.1 L795.2,399.3 L793.8,401.5 L792.3,403.7 L790.9,405.9 L789.4,408.1 L788.0,410.3 L786.5,412.5 L785.1,414.7 L783.7,416.9 L782.2,419.1 L780.8,421.3 L779.4,423.5 L777.9,425.7 L776.5,427.9 L775.1,430.0 L773.6,432.2 L772.2,434.4 L770.8,436.6 L769.4,438.8 L768.0,441.0 L766.5,443.2 L765.1,445.4 L763.7,447.6 L762.3,449.8 L760.9,452.0 L759.5,454.2 L758.1,456.4 L756.7,458.6 L755.3,460.8 L753.9,463.0 L752.5,465.2 L751.1,467.4 L749.7,469.6 L748.3,471.8 L746.9,474.0 L745.5,476.2 L744.1,478.4 L742.7,480.6 L741.3,482.8 L739.9,485.0 L738.6,487.2 L737.2,489.4 L735.8,491.6 L734.4,493.8 L733.0,496.0 L731.7,498.2 L730.3,500.4 L728.9,502.6 L727.6,504.8 L726.2,507.0 L724.8,509.2 L723.5,511.4 L722.1,513.6 L720.7,515.8 L719.4,517.9 L718.0,520.1 L716.7,522.3 L715.3,524.5 L713.9,526.7 L712.6,528.9 L711.2,531.1 L709.9,533.3 L708.5,535.5 L707.2,537.7 L705.9,539.9 L704.5,542.1 L703.2,544.3 L701.8,546.5 L700.5,548.7 L699.2,550.9 L697.8,553.1 L696.5,555.3 L695.2,557.5 L693.8,559.7 L692.5,561.9 L691.2,564.1 L689.9,566.3 L688.5,568.5 L687.2,570.7 L685.9,572.9 L684.6,575.1 L683.3,577.3 L682.0,579.5 L680.7,581.7 L679.3,583.9 L678.0,586.1 L676.7,588.3 L675.4,590.5 L674.1,592.7 L672.8,594.9 L671.5,597.1 L670.2,599.3 L668.9,601.5 L667.6,603.7 L666.3,605.9 L665.1,608.1 L663.8,610.3 L662.5,612.5 L661.2,614.7 L659.9,616.9 L658.6,619.1 L657.3,621.3 L656.1,623.5 L654.8,625.7 L653.5,627.9 L652.2,630.1 L651.0,632.3 L649.7,634.5 L648.4,636.7 L647.2,638.9 L645.9,641.1 L644.6,643.3 L643.4,645.5 L642.1,647.7 L640.8,649.9 L639.5,652.2 L638.2,654.5 L636.9,656.8 L635.6,659.0 L634.4,661.2 L633.1,663.4 L632.0,665.4 L630.8,667.4 L629.7,669.4 L628.6,671.4 L627.4,673.4 L626.3,675.4 L625.3,677.3 L624.3,679.1 L623.3,680.7 L622.5,682.2 L621.8,683.4 L621.2,684.4 L698.0,727.4 L698.3,726.8 L698.6,726.1 L699.1,725.3 L699.5,724.4 L700.1,723.4 L700.7,722.2 L701.3,721.0 L702.0,719.7 L702.8,718.2 L703.7,716.6 L704.6,714.9 L705.6,712.9 L706.8,710.8 L708.0,708.6 L709.2,706.3 L710.5,703.9 L711.8,701.5 L713.1,699.2 L714.4,696.8 L715.6,694.6 L716.8,692.4 L718.0,690.2 L719.2,688.0 L720.4,685.8 L721.6,683.6 L722.8,681.4 L724.0,679.2 L725.2,677.0 L726.5,674.7 L727.7,672.5 L728.9,670.3 L730.1,668.1 L731.3,665.9 L732.6,663.7 L733.8,661.5 L735.0,659.3 L736.2,657.1 L737.5,654.9 L738.7,652.7 L739.9,650.5 L741.2,648.3 L742.4,646.1 L743.6,643.9 L744.9,641.7 L746.1,639.5 L747.4,637.3 L748.6,635.1 L749.9,632.9 L751.1,630.7 L752.4,628.5 L753.6,626.3 L754.9,624.1 L756.1,621.9 L757.4,619.7 L758.6,617.5 L759.9,615.3 L761.2,613.1 L762.4,610.9 L763.7,608.7 L765.0,606.5 L766.2,604.2 L767.5,602.0 L768.8,599.8 L770.0,597.6 L771.3,595.4 L772.6,593.2 L773.9,591.0 L775.2,588.8 L776.4,586.6 L777.7,584.4 L779.0,582.2 L780.3,580.0 L781.6,577.8 L782.9,575.6 L784.2,573.4 L785.5,571.2 L786.8,569.0 L788.1,566.8 L789.4,564.6 L790.7,562.4 L792.0,560.2 L793.3,558.0 L794.6,555.8 L795.9,553.6 L797.2,551.4 L798.5,549.2 L799.8,547.0 L801.1,544.7 L802.4,542.5 L803.8,540.3 L805.1,538.1 L806.4,535.9 L807.7,533.7 L809.1,531.5 L810.4,529.3 L811.7,527.1 L813.0,524.9 L814.4,522.7 L815.7,520.5 L817.0,518.3 L818.4,516.1 L819.7,513.9 L821.1,511.7 L822.4,509.5 L823.7,507.3 L825.1,505.1 L826.4,502.9 L827.8,500.7 L829.1,498.5 L830.5,496.3 L831.8,494.1 L833.2,491.8 L834.6,489.6 L835.9,487.4 L837.3,485.2 L838.6,483.0 L840.0,480.8 L841.4,478.6 L842.7,476.4 L844.1,474.2 L845.5,472.0 L846.8,469.8 L848.2,467.6 L849.6,465.4 L851.0,463.2 L852.4,461.0 L853.7,458.8 L855.1,456.6 L856.5,454.4 L857.9,452.2 L859.3,450.0 L860.7,447.8 L862.1,445.6 L863.4,443.3 L864.8,441.1 L866.2,438.9 L867.6,436.7 L869.0,434.5 L870.4,432.3 L871.8,430.1 L873.3,427.9 L874.7,425.6 L876.3,423.3 L877.8,421.0 L879.4,418.6 L880.9,416.3 L882.3,414.0 L883.6,411.7 L884.8,409.5 L885.9,407.5 L886.8,405.6 L887.6,403.9 L888.3,402.3 L888.9,400.8 L889.4,399.4 L889.8,398.0 L890.2,396.7 L890.6,395.4 L890.9,394.2 L891.3,392.8 L891.6,391.3 L891.9,389.8 L892.2,388.2 L892.5,386.7 L892.7,385.2 L892.9,383.7 L893.1,382.3 L893.2,381.0 L893.3,379.7 L893.4,378.6 L893.4,377.5 L893.5,376.5 L893.5,375.5 L893.4,374.6 L893.3,373.7 L893.2,372.9 L893.0,372.1 L892.8,371.3 L892.6,370.5 L892.4,369.7 L892.1,368.7 L891.5,367.6 L890.9,366.6 L890.3,365.6 L889.6,364.7 L889.0,363.8 L888.4,363.0 L887.9,362.3 L887.4,361.7 L887.1,361.3Z" fill="#ebebec"/>
<path d="M840.2,296.5 L840.3,297.0 L840.6,297.8 L840.8,298.7 L841.1,299.7 L841.4,300.7 L841.7,301.8 L842.0,302.9 L842.2,304.0 L842.5,304.9 L842.8,305.7 L843.1,306.4 L843.2,307.2 L843.4,307.9 L843.6,308.7 L843.7,309.4 L843.8,310.2 L843.8,311.0 L843.9,311.7 L844.0,312.4 L844.0,313.2 L844.1,313.9 L844.1,314.5 L844.1,315.0 L844.1,315.5 L844.1,316.0 L844.1,316.6 L844.0,317.2 L843.9,317.9 L843.8,318.7 L843.6,319.7 L843.4,320.8 L843.2,322.1 L842.9,323.5 L842.6,325.0 L842.3,326.5 L841.9,328.1 L841.5,329.7 L841.1,331.2 L840.7,332.7 L840.2,334.1 L839.7,335.5 L839.1,336.9 L838.5,338.3 L837.9,339.8 L837.2,341.2 L836.5,342.6 L835.8,344.1 L835.1,345.5 L834.4,347.0 L833.7,348.6 L833.1,350.0 L832.4,351.5 L831.8,352.8 L831.2,354.2 L830.5,355.6 L829.9,356.9 L829.2,358.4 L828.4,359.9 L827.5,361.5 L826.5,363.2 L825.3,365.1 L824.1,367.1 L822.7,369.2 L821.2,371.4 L819.7,373.6 L818.2,375.9 L816.6,378.2 L815.0,380.6 L813.5,382.9 L812.0,385.1 L810.5,387.3 L809.1,389.5 L807.7,391.7 L806.2,393.9 L804.8,396.1 L803.3,398.3 L801.9,400.5 L800.5,402.7 L799.0,404.9 L797.6,407.1 L796.2,409.3 L794.7,411.5 L793.3,413.7 L791.9,415.9 L790.5,418.2 L789.1,420.4 L787.6,422.6 L786.2,424.8 L784.8,427.0 L783.4,429.2 L782.0,431.4 L780.6,433.6 L779.2,435.8 L777.7,438.0 L776.3,440.2 L774.9,442.4 L773.5,444.6 L772.1,446.8 L770.7,449.0 L769.3,451.2 L767.9,453.4 L766.5,455.6 L765.2,457.8 L763.8,460.0 L762.4,462.2 L761.0,464.4 L759.6,466.6 L758.2,468.8 L756.8,471.0 L755.5,473.2 L754.1,475.4 L752.7,477.6 L751.3,479.8 L749.9,482.0 L748.6,484.2 L747.2,486.4 L745.8,488.7 L744.5,490.9 L743.1,493.1 L741.7,495.3 L740.4,497.5 L739.0,499.7 L737.7,501.9 L736.3,504.1 L734.9,506.3 L733.6,508.5 L732.2,510.7 L730.9,512.9 L729.5,515.1 L728.2,517.3 L726.8,519.5 L725.5,521.7 L724.2,523.9 L722.8,526.1 L721.5,528.3 L720.1,530.5 L718.8,532.7 L717.5,534.9 L716.1,537.1 L714.8,539.3 L713.5,541.5 L712.2,543.7 L710.8,545.9 L709.5,548.1 L708.2,550.3 L706.9,552.5 L705.5,554.7 L704.2,556.9 L702.9,559.1 L701.6,561.4 L700.3,563.6 L699.0,565.8 L697.7,568.0 L696.4,570.2 L695.1,572.4 L693.8,574.6 L692.5,576.8 L691.2,579.0 L689.9,581.2 L688.6,583.4 L687.3,585.6 L686.0,587.8 L684.7,590.0 L683.4,592.2 L682.1,594.4 L680.8,596.6 L679.5,598.8 L678.2,601.0 L677.0,603.2 L675.7,605.4 L674.4,607.6 L673.1,609.8 L671.9,612.0 L670.6,614.2 L669.3,616.4 L668.0,618.6 L666.8,620.8 L665.5,623.0 L664.2,625.2 L663.0,627.4 L661.7,629.6 L660.5,631.8 L659.2,634.1 L658.0,636.3 L656.7,638.5 L655.4,640.7 L654.2,642.9 L652.9,645.1 L651.7,647.3 L650.5,649.5 L649.2,651.7 L647.9,654.0 L646.6,656.2 L645.3,658.5 L644.1,660.8 L642.8,663.1 L641.6,665.3 L640.4,667.4 L639.2,669.5 L638.1,671.5 L637.0,673.5 L635.9,675.5 L634.7,677.5 L633.7,679.5 L632.6,681.4 L631.6,683.2 L630.7,684.8 L629.9,686.3 L629.2,687.5 L628.7,688.5 L634.0,691.4 L634.5,690.5 L635.2,689.2 L636.0,687.8 L637.0,686.1 L637.9,684.3 L639.0,682.4 L640.1,680.5 L641.2,678.5 L642.3,676.5 L643.4,674.5 L644.6,672.5 L645.7,670.4 L646.9,668.3 L648.2,666.1 L649.4,663.8 L650.7,661.6 L652.0,659.3 L653.3,657.0 L654.6,654.7 L655.8,652.5 L657.1,650.3 L658.3,648.1 L659.6,645.9 L660.8,643.7 L662.1,641.5 L663.4,639.3 L664.6,637.1 L665.9,635.0 L667.1,632.8 L668.4,630.6 L669.7,628.4 L670.9,626.2 L672.2,624.0 L673.5,621.8 L674.8,619.6 L676.0,617.4 L677.3,615.2 L678.6,613.0 L679.9,610.8 L681.1,608.6 L682.4,606.4 L683.7,604.2 L685.0,602.0 L686.3,599.8 L687.6,597.6 L688.9,595.4 L690.2,593.2 L691.5,591.0 L692.7,588.8 L694.0,586.6 L695.3,584.4 L696.6,582.2 L698.0,580.0 L699.3,577.8 L700.6,575.6 L701.9,573.4 L703.2,571.2 L704.5,569.0 L705.8,566.8 L707.1,564.6 L708.4,562.5 L709.8,560.3 L711.1,558.1 L712.4,555.9 L713.7,553.7 L715.0,551.5 L716.4,549.3 L717.7,547.1 L719.0,544.9 L720.4,542.7 L721.7,540.5 L723.0,538.3 L724.4,536.1 L725.7,533.9 L727.0,531.7 L728.4,529.5 L729.7,527.3 L731.1,525.1 L732.4,522.9 L733.8,520.7 L735.1,518.5 L736.5,516.3 L737.8,514.1 L739.2,511.9 L740.5,509.7 L741.9,507.5 L743.3,505.3 L744.6,503.1 L746.0,500.9 L747.3,498.7 L748.7,496.5 L750.1,494.3 L751.4,492.1 L752.8,490.0 L754.2,487.8 L755.6,485.6 L756.9,483.4 L758.3,481.2 L759.7,479.0 L761.1,476.8 L762.5,474.6 L763.9,472.4 L765.2,470.2 L766.6,468.0 L768.0,465.8 L769.4,463.6 L770.8,461.4 L772.2,459.2 L773.6,457.0 L775.0,454.8 L776.4,452.6 L777.8,450.4 L779.2,448.2 L780.6,446.0 L782.0,443.8 L783.4,441.6 L784.8,439.4 L786.3,437.2 L787.7,435.0 L789.1,432.8 L790.5,430.6 L791.9,428.4 L793.3,426.2 L794.8,424.0 L796.2,421.8 L797.6,419.7 L799.0,417.5 L800.5,415.3 L801.9,413.1 L803.3,410.9 L804.8,408.7 L806.2,406.5 L807.6,404.3 L809.1,402.1 L810.5,399.9 L812.0,397.7 L813.4,395.5 L814.9,393.3 L816.3,391.1 L817.7,388.9 L819.2,386.7 L820.8,384.4 L822.3,382.1 L823.9,379.8 L825.5,377.5 L827.0,375.2 L828.5,373.0 L829.9,370.8 L831.2,368.8 L832.4,366.8 L833.5,364.9 L834.5,363.2 L835.3,361.6 L836.1,360.0 L836.8,358.6 L837.5,357.1 L838.2,355.7 L838.8,354.3 L839.4,352.9 L840.1,351.4 L840.8,350.0 L841.5,348.5 L842.1,346.9 L842.7,345.4 L843.4,343.8 L843.9,342.2 L844.5,340.7 L845.0,339.1 L845.5,337.5 L846.0,335.9 L846.4,334.2 L846.7,332.5 L847.0,330.8 L847.3,329.1 L847.6,327.5 L847.8,325.8 L848.0,324.3 L848.1,322.8 L848.2,321.5 L848.4,320.3 L848.5,319.3 L848.6,318.4 L848.6,317.5 L848.6,316.8 L848.6,316.1 L848.6,315.4 L848.6,314.8 L848.5,314.2 L848.5,313.5 L848.4,312.8 L848.3,312.0 L848.2,311.2 L848.1,310.4 L848.0,309.6 L847.8,308.8 L847.6,307.9 L847.4,307.0 L847.2,306.1 L846.9,305.2 L846.6,304.3 L846.2,303.4 L845.6,302.4 L844.9,301.5 L844.2,300.5 L843.4,299.7 L842.7,298.8 L842.0,298.0 L841.3,297.4 L840.8,296.8 L840.4,296.3Z" fill="#080808"/>
<path d="M850.3,307.8 L850.5,308.2 L850.7,308.8 L851.0,309.5 L851.3,310.2 L851.7,311.0 L852.0,311.8 L852.3,312.7 L852.6,313.4 L852.8,314.2 L852.9,314.8 L853.1,315.4 L853.3,315.8 L853.4,316.2 L853.5,316.6 L853.6,316.9 L853.6,317.3 L853.7,317.7 L853.7,318.3 L853.7,319.1 L853.7,320.0 L853.7,321.1 L853.6,322.4 L853.6,323.8 L853.5,325.3 L853.4,326.8 L853.2,328.4 L853.0,330.0 L852.8,331.6 L852.5,333.1 L852.2,334.5 L851.8,335.9 L851.4,337.3 L851.0,338.8 L850.5,340.2 L850.0,341.6 L849.4,343.1 L848.9,344.5 L848.3,345.9 L847.7,347.4 L847.0,348.8 L846.4,350.3 L845.7,351.7 L845.0,353.2 L844.2,354.6 L843.5,356.1 L842.8,357.6 L842.0,359.1 L841.3,360.6 L840.6,362.0 L839.9,363.4 L839.2,364.8 L838.6,366.0 L838.0,367.2 L837.5,368.3 L836.9,369.5 L836.3,370.6 L835.6,371.8 L834.9,373.1 L834.0,374.6 L833.1,376.2 L831.9,378.0 L830.7,379.9 L829.3,382.0 L827.9,384.2 L826.4,386.5 L824.8,388.8 L823.2,391.2 L821.7,393.5 L820.1,395.9 L818.7,398.1 L817.2,400.3 L815.8,402.5 L814.4,404.7 L812.9,406.9 L811.5,409.1 L810.1,411.3 L808.6,413.5 L807.2,415.7 L805.8,417.9 L804.4,420.1 L803.0,422.3 L801.5,424.6 L800.1,426.8 L798.7,429.0 L797.3,431.2 L795.9,433.4 L794.5,435.6 L793.1,437.8 L791.7,440.0 L790.3,442.2 L788.8,444.4 L787.4,446.6 L786.0,448.8 L784.6,451.0 L783.3,453.2 L781.9,455.4 L780.5,457.6 L779.1,459.8 L777.7,462.0 L776.3,464.2 L774.9,466.4 L773.5,468.6 L772.1,470.8 L770.8,473.0 L769.4,475.2 L768.0,477.4 L766.6,479.6 L765.3,481.8 L763.9,484.0 L762.5,486.2 L761.1,488.4 L759.8,490.6 L758.4,492.8 L757.0,495.1 L755.7,497.3 L754.3,499.5 L753.0,501.7 L751.6,503.9 L750.3,506.1 L748.9,508.3 L747.5,510.5 L746.2,512.7 L744.8,514.9 L743.5,517.1 L742.2,519.3 L740.8,521.5 L739.5,523.7 L738.1,525.9 L736.8,528.1 L735.5,530.3 L734.1,532.5 L732.8,534.7 L731.5,536.9 L730.1,539.1 L728.8,541.3 L727.5,543.5 L726.1,545.7 L724.8,547.9 L723.5,550.1 L722.2,552.3 L720.9,554.5 L719.5,556.7 L718.2,558.9 L716.9,561.1 L715.6,563.3 L714.3,565.6 L713.0,567.8 L711.7,570.0 L710.4,572.2 L709.1,574.4 L707.8,576.6 L706.5,578.8 L705.2,581.0 L703.9,583.2 L702.6,585.4 L701.3,587.6 L700.0,589.8 L698.7,592.0 L697.4,594.2 L696.1,596.4 L694.8,598.6 L693.6,600.8 L692.3,603.0 L691.0,605.2 L689.7,607.4 L688.4,609.6 L687.2,611.8 L685.9,614.0 L684.6,616.2 L683.3,618.4 L682.1,620.6 L680.8,622.8 L679.6,625.0 L678.3,627.2 L677.0,629.4 L675.8,631.6 L674.5,633.8 L673.3,636.0 L672.0,638.3 L670.7,640.5 L669.5,642.7 L668.2,644.9 L667.0,647.1 L665.8,649.3 L664.5,651.5 L663.3,653.7 L662.0,655.9 L660.8,658.1 L659.5,660.3 L658.3,662.5 L657.0,664.7 L655.7,667.1 L654.4,669.5 L653.1,671.8 L651.8,674.2 L650.5,676.5 L649.2,678.7 L648.1,680.8 L647.0,682.8 L646.0,684.5 L645.2,686.1 L644.4,687.5 L643.6,688.8 L643.0,690.1 L642.4,691.2 L641.8,692.1 L641.4,693.0 L640.9,693.8 L640.6,694.5 L640.2,695.0 L645.6,698.0 L645.9,697.4 L646.3,696.7 L646.7,696.0 L647.2,695.1 L647.7,694.1 L648.3,693.0 L649.0,691.8 L649.7,690.5 L650.5,689.1 L651.4,687.5 L652.4,685.8 L653.4,683.8 L654.6,681.7 L655.9,679.5 L657.1,677.2 L658.5,674.9 L659.8,672.5 L661.1,670.1 L662.4,667.8 L663.7,665.5 L664.9,663.3 L666.2,661.1 L667.4,658.9 L668.7,656.7 L669.9,654.5 L671.2,652.3 L672.4,650.1 L673.7,647.9 L674.9,645.7 L676.2,643.5 L677.4,641.3 L678.7,639.2 L679.9,637.0 L681.2,634.8 L682.5,632.6 L683.7,630.4 L685.0,628.2 L686.3,626.0 L687.5,623.8 L688.8,621.6 L690.1,619.4 L691.4,617.2 L692.6,615.0 L693.9,612.8 L695.2,610.6 L696.5,608.4 L697.8,606.2 L699.0,604.0 L700.3,601.8 L701.6,599.6 L702.9,597.4 L704.2,595.2 L705.5,593.0 L706.8,590.8 L708.1,588.6 L709.4,586.4 L710.7,584.2 L712.0,582.0 L713.3,579.8 L714.6,577.6 L715.9,575.4 L717.2,573.2 L718.5,571.0 L719.8,568.8 L721.1,566.7 L722.5,564.5 L723.8,562.3 L725.1,560.1 L726.4,557.9 L727.7,555.7 L729.1,553.5 L730.4,551.3 L731.7,549.1 L733.0,546.9 L734.4,544.7 L735.7,542.5 L737.0,540.3 L738.4,538.1 L739.7,535.9 L741.0,533.7 L742.4,531.5 L743.7,529.3 L745.1,527.1 L746.4,524.9 L747.8,522.7 L749.1,520.5 L750.5,518.3 L751.8,516.1 L753.2,513.9 L754.5,511.7 L755.9,509.5 L757.2,507.3 L758.6,505.1 L760.0,502.9 L761.3,500.7 L762.7,498.5 L764.0,496.4 L765.4,494.2 L766.8,492.0 L768.2,489.8 L769.5,487.6 L770.9,485.4 L772.3,483.2 L773.7,481.0 L775.0,478.8 L776.4,476.6 L777.8,474.4 L779.2,472.2 L780.6,470.0 L782.0,467.8 L783.4,465.6 L784.8,463.4 L786.1,461.2 L787.5,459.0 L788.9,456.8 L790.3,454.6 L791.7,452.4 L793.1,450.2 L794.5,448.0 L796.0,445.8 L797.4,443.6 L798.8,441.4 L800.2,439.2 L801.6,437.0 L803.0,434.8 L804.4,432.6 L805.8,430.4 L807.3,428.2 L808.7,426.1 L810.1,423.9 L811.5,421.7 L813.0,419.5 L814.4,417.3 L815.8,415.1 L817.2,412.9 L818.7,410.7 L820.1,408.5 L821.5,406.3 L823.0,404.1 L824.4,401.9 L825.9,399.7 L827.4,397.4 L829.0,395.0 L830.6,392.7 L832.1,390.4 L833.6,388.1 L835.1,385.8 L836.5,383.7 L837.8,381.7 L839.0,379.8 L840.0,378.1 L840.9,376.6 L841.7,375.2 L842.4,373.9 L843.1,372.7 L843.7,371.5 L844.3,370.3 L844.8,369.1 L845.5,367.9 L846.1,366.6 L846.8,365.1 L847.6,363.7 L848.3,362.2 L849.1,360.7 L849.8,359.1 L850.5,357.6 L851.2,356.0 L851.8,354.4 L852.4,352.8 L853.0,351.2 L853.5,349.6 L854.0,348.1 L854.5,346.5 L855.0,344.9 L855.4,343.4 L855.9,341.8 L856.3,340.2 L856.6,338.7 L856.9,337.1 L857.2,335.5 L857.4,333.8 L857.6,332.2 L857.7,330.4 L857.8,328.7 L857.9,327.1 L857.9,325.4 L857.9,323.9 L857.9,322.5 L857.9,321.1 L857.9,320.0 L857.9,319.0 L857.8,318.1 L857.7,317.3 L857.6,316.7 L857.5,316.0 L857.3,315.4 L857.1,314.9 L856.9,314.3 L856.6,313.8 L856.3,313.2 L855.8,312.6 L855.2,311.9 L854.5,311.2 L853.9,310.6 L853.2,309.9 L852.5,309.3 L851.9,308.8 L851.3,308.3 L850.9,307.9 L850.5,307.6Z" fill="#080808"/>
<path d="M859.1,320.4 L859.2,320.8 L859.4,321.4 L859.6,322.1 L859.9,322.8 L860.2,323.6 L860.4,324.4 L860.7,325.3 L860.8,326.1 L861.0,326.9 L861.0,327.6 L861.1,328.3 L861.3,328.9 L861.4,329.5 L861.5,330.1 L861.6,330.7 L861.7,331.4 L861.7,332.1 L861.7,333.0 L861.7,333.9 L861.6,334.9 L861.5,336.1 L861.4,337.4 L861.3,338.8 L861.1,340.3 L860.9,341.8 L860.7,343.4 L860.4,344.9 L860.1,346.5 L859.7,348.0 L859.3,349.4 L858.9,350.8 L858.5,352.3 L858.0,353.7 L857.4,355.2 L856.8,356.7 L856.3,358.1 L855.7,359.6 L855.0,361.0 L854.4,362.4 L853.8,363.8 L853.3,365.2 L852.8,366.4 L852.3,367.6 L851.8,368.7 L851.4,369.8 L850.9,370.9 L850.4,372.0 L849.8,373.3 L849.1,374.7 L848.2,376.3 L847.1,378.0 L845.9,380.0 L844.6,382.0 L843.2,384.2 L841.6,386.5 L840.1,388.8 L838.5,391.2 L836.9,393.5 L835.3,395.8 L833.9,398.1 L832.4,400.3 L831.0,402.5 L829.5,404.7 L828.1,406.9 L826.7,409.1 L825.3,411.3 L823.8,413.5 L822.4,415.7 L821.0,417.9 L819.6,420.1 L818.1,422.3 L816.7,424.5 L815.3,426.7 L813.9,429.0 L812.5,431.2 L811.1,433.4 L809.7,435.6 L808.2,437.8 L806.8,440.0 L805.4,442.2 L804.0,444.4 L802.6,446.6 L801.2,448.8 L799.8,451.0 L798.4,453.2 L797.0,455.4 L795.7,457.6 L794.3,459.8 L792.9,462.0 L791.5,464.2 L790.1,466.4 L788.7,468.6 L787.3,470.8 L785.9,473.0 L784.6,475.2 L783.2,477.4 L781.8,479.6 L780.4,481.8 L779.1,484.0 L777.7,486.2 L776.3,488.4 L775.0,490.6 L773.6,492.8 L772.2,495.0 L770.9,497.2 L769.5,499.5 L768.2,501.7 L766.8,503.9 L765.4,506.1 L764.1,508.3 L762.7,510.5 L761.4,512.7 L760.0,514.9 L758.7,517.1 L757.3,519.3 L756.0,521.5 L754.7,523.7 L753.3,525.9 L752.0,528.1 L750.6,530.3 L749.3,532.5 L748.0,534.7 L746.6,536.9 L745.3,539.1 L744.0,541.3 L742.6,543.5 L741.3,545.7 L740.0,547.9 L738.7,550.1 L737.4,552.3 L736.0,554.5 L734.7,556.7 L733.4,558.9 L732.1,561.1 L730.8,563.3 L729.5,565.5 L728.2,567.7 L726.9,569.9 L725.6,572.2 L724.2,574.4 L722.9,576.6 L721.6,578.8 L720.3,581.0 L719.1,583.2 L717.8,585.4 L716.5,587.6 L715.2,589.8 L713.9,592.0 L712.6,594.2 L711.3,596.4 L710.0,598.6 L708.7,600.8 L707.5,603.0 L706.2,605.2 L704.9,607.4 L703.6,609.6 L702.3,611.8 L701.1,614.0 L699.8,616.2 L698.5,618.4 L697.3,620.6 L696.0,622.8 L694.7,625.0 L693.5,627.2 L692.2,629.4 L691.0,631.6 L689.7,633.8 L688.4,636.0 L687.2,638.2 L685.9,640.4 L684.7,642.6 L683.4,644.9 L682.2,647.1 L680.9,649.3 L679.7,651.5 L678.4,653.7 L677.2,655.9 L676.0,658.1 L674.7,660.3 L673.5,662.5 L672.2,664.7 L671.0,667.0 L669.7,669.2 L668.4,671.5 L667.2,673.8 L665.9,676.0 L664.7,678.3 L663.5,680.4 L662.3,682.5 L661.2,684.5 L660.1,686.5 L659.0,688.5 L657.9,690.5 L656.8,692.5 L655.8,694.4 L654.8,696.2 L653.9,697.9 L653.1,699.3 L652.4,700.6 L651.8,701.6 L657.2,704.5 L657.7,703.5 L658.4,702.3 L659.2,700.8 L660.2,699.2 L661.1,697.4 L662.2,695.5 L663.3,693.5 L664.4,691.5 L665.5,689.5 L666.6,687.5 L667.7,685.5 L668.9,683.4 L670.1,681.3 L671.3,679.1 L672.6,676.8 L673.9,674.5 L675.1,672.3 L676.4,670.0 L677.7,667.7 L678.9,665.5 L680.2,663.3 L681.4,661.1 L682.6,658.9 L683.9,656.7 L685.1,654.5 L686.4,652.3 L687.6,650.1 L688.9,647.9 L690.1,645.8 L691.4,643.6 L692.6,641.4 L693.9,639.2 L695.2,637.0 L696.4,634.8 L697.7,632.6 L699.0,630.4 L700.2,628.2 L701.5,626.0 L702.8,623.8 L704.0,621.6 L705.3,619.4 L706.6,617.2 L707.8,615.0 L709.1,612.8 L710.4,610.6 L711.7,608.4 L713.0,606.2 L714.3,604.0 L715.5,601.8 L716.8,599.6 L718.1,597.4 L719.4,595.2 L720.7,593.0 L722.0,590.8 L723.3,588.6 L724.6,586.4 L725.9,584.2 L727.2,582.0 L728.5,579.8 L729.8,577.6 L731.1,575.4 L732.4,573.3 L733.7,571.1 L735.0,568.9 L736.3,566.7 L737.7,564.5 L739.0,562.3 L740.3,560.1 L741.6,557.9 L742.9,555.7 L744.3,553.5 L745.6,551.3 L746.9,549.1 L748.2,546.9 L749.6,544.7 L750.9,542.5 L752.2,540.3 L753.6,538.1 L754.9,535.9 L756.3,533.7 L757.6,531.5 L758.9,529.3 L760.3,527.1 L761.6,524.9 L763.0,522.7 L764.3,520.5 L765.7,518.3 L767.0,516.1 L768.4,513.9 L769.7,511.7 L771.1,509.5 L772.4,507.3 L773.8,505.1 L775.2,502.9 L776.5,500.8 L777.9,498.6 L779.3,496.4 L780.6,494.2 L782.0,492.0 L783.4,489.8 L784.7,487.6 L786.1,485.4 L787.5,483.2 L788.9,481.0 L790.3,478.8 L791.6,476.6 L793.0,474.4 L794.4,472.2 L795.8,470.0 L797.2,467.8 L798.6,465.6 L800.0,463.4 L801.4,461.2 L802.8,459.0 L804.2,456.8 L805.6,454.6 L807.0,452.4 L808.4,450.2 L809.8,448.0 L811.2,445.8 L812.6,443.6 L814.0,441.4 L815.4,439.2 L816.8,437.0 L818.2,434.8 L819.6,432.6 L821.1,430.5 L822.5,428.3 L823.9,426.1 L825.3,423.9 L826.7,421.7 L828.2,419.5 L829.6,417.3 L831.0,415.1 L832.5,412.9 L833.9,410.7 L835.3,408.5 L836.8,406.3 L838.2,404.1 L839.6,401.9 L841.1,399.7 L842.6,397.4 L844.2,395.1 L845.8,392.7 L847.4,390.4 L848.9,388.1 L850.4,385.8 L851.8,383.7 L853.1,381.7 L854.2,379.7 L855.2,378.0 L856.0,376.4 L856.8,375.0 L857.4,373.6 L857.9,372.4 L858.4,371.2 L858.8,369.9 L859.1,368.7 L859.5,367.5 L860.0,366.2 L860.5,364.7 L860.9,363.2 L861.4,361.7 L861.9,360.2 L862.4,358.6 L862.9,357.0 L863.4,355.4 L863.8,353.8 L864.1,352.2 L864.5,350.6 L864.7,349.0 L865.0,347.3 L865.2,345.6 L865.3,344.0 L865.5,342.3 L865.6,340.7 L865.7,339.2 L865.8,337.7 L865.9,336.3 L865.9,335.1 L865.9,333.9 L865.9,332.9 L865.8,331.9 L865.7,331.1 L865.6,330.2 L865.5,329.4 L865.3,328.7 L865.1,327.9 L864.9,327.2 L864.6,326.4 L864.1,325.6 L863.5,324.8 L863.0,324.1 L862.3,323.4 L861.7,322.7 L861.1,322.1 L860.6,321.5 L860.1,321.0 L859.6,320.6 L859.3,320.2Z" fill="#080808"/>
<path d="M867.9,333.7 L868.0,334.2 L868.2,334.8 L868.4,335.5 L868.6,336.3 L868.8,337.2 L869.0,338.1 L869.2,339.0 L869.4,339.9 L869.5,340.7 L869.5,341.5 L869.7,342.3 L869.8,343.0 L869.9,343.7 L870.0,344.5 L870.1,345.2 L870.1,346.0 L870.2,346.9 L870.1,347.8 L870.1,348.8 L870.0,349.9 L869.9,351.1 L869.7,352.4 L869.5,353.8 L869.3,355.3 L869.0,356.9 L868.7,358.5 L868.4,360.0 L868.0,361.6 L867.7,363.1 L867.4,364.5 L867.0,365.9 L866.8,367.2 L866.6,368.3 L866.3,369.4 L866.1,370.5 L865.8,371.5 L865.4,372.6 L865.0,373.7 L864.3,375.0 L863.5,376.5 L862.5,378.2 L861.3,380.0 L859.9,382.0 L858.5,384.2 L857.0,386.5 L855.4,388.8 L853.7,391.1 L852.1,393.5 L850.5,395.8 L849.0,398.1 L847.6,400.3 L846.2,402.5 L844.7,404.7 L843.3,406.9 L841.9,409.1 L840.4,411.3 L839.0,413.5 L837.6,415.7 L836.2,417.9 L834.7,420.1 L833.3,422.3 L831.9,424.5 L830.5,426.7 L829.1,428.9 L827.7,431.1 L826.2,433.3 L824.8,435.6 L823.4,437.8 L822.0,440.0 L820.6,442.2 L819.2,444.4 L817.8,446.6 L816.4,448.8 L815.0,451.0 L813.6,453.2 L812.2,455.4 L810.8,457.6 L809.4,459.8 L808.1,462.0 L806.7,464.2 L805.3,466.4 L803.9,468.6 L802.5,470.8 L801.1,473.0 L799.8,475.2 L798.4,477.4 L797.0,479.6 L795.6,481.8 L794.3,484.0 L792.9,486.2 L791.5,488.4 L790.1,490.6 L788.8,492.8 L787.4,495.0 L786.1,497.2 L784.7,499.4 L783.3,501.6 L782.0,503.8 L780.6,506.1 L779.3,508.3 L777.9,510.5 L776.6,512.7 L775.2,514.9 L773.9,517.1 L772.5,519.3 L771.2,521.5 L769.8,523.7 L768.5,525.9 L767.2,528.1 L765.8,530.3 L764.5,532.5 L763.2,534.7 L761.8,536.9 L760.5,539.1 L759.2,541.3 L757.8,543.5 L756.5,545.7 L755.2,547.9 L753.9,550.1 L752.5,552.3 L751.2,554.5 L749.9,556.7 L748.6,558.9 L747.3,561.1 L746.0,563.3 L744.7,565.5 L743.3,567.7 L742.0,569.9 L740.7,572.1 L739.4,574.3 L738.1,576.5 L736.8,578.8 L735.5,581.0 L734.2,583.2 L732.9,585.4 L731.6,587.6 L730.4,589.8 L729.1,592.0 L727.8,594.2 L726.5,596.4 L725.2,598.6 L723.9,600.8 L722.6,603.0 L721.4,605.2 L720.1,607.4 L718.8,609.6 L717.5,611.8 L716.3,614.0 L715.0,616.2 L713.7,618.4 L712.5,620.6 L711.2,622.8 L709.9,625.0 L708.7,627.2 L707.4,629.4 L706.1,631.6 L704.9,633.8 L703.6,636.0 L702.4,638.2 L701.1,640.4 L699.9,642.6 L698.6,644.8 L697.4,647.0 L696.1,649.2 L694.9,651.5 L693.6,653.7 L692.4,655.9 L691.2,658.1 L689.9,660.3 L688.7,662.5 L687.5,664.7 L686.2,666.8 L685.0,669.0 L683.8,671.2 L682.6,673.4 L681.4,675.6 L680.1,677.8 L678.9,680.0 L677.7,682.2 L676.4,684.5 L675.1,686.9 L673.7,689.5 L672.2,692.2 L670.6,695.0 L669.2,697.7 L667.7,700.3 L666.4,702.7 L665.2,704.9 L664.2,706.7 L663.4,708.1 L668.8,711.1 L669.6,709.7 L670.6,707.9 L671.8,705.7 L673.1,703.3 L674.6,700.7 L676.1,697.9 L677.6,695.2 L679.1,692.5 L680.5,689.9 L681.8,687.5 L683.1,685.2 L684.3,683.0 L685.6,680.8 L686.8,678.6 L688.0,676.4 L689.2,674.2 L690.5,672.1 L691.7,669.9 L692.9,667.7 L694.1,665.5 L695.4,663.3 L696.6,661.1 L697.9,658.9 L699.1,656.7 L700.3,654.5 L701.6,652.4 L702.8,650.2 L704.1,648.0 L705.3,645.8 L706.6,643.6 L707.9,641.4 L709.1,639.2 L710.4,637.0 L711.6,634.8 L712.9,632.6 L714.2,630.4 L715.4,628.2 L716.7,626.0 L718.0,623.8 L719.2,621.6 L720.5,619.4 L721.8,617.2 L723.1,615.0 L724.3,612.8 L725.6,610.6 L726.9,608.4 L728.2,606.2 L729.5,604.0 L730.8,601.8 L732.0,599.6 L733.3,597.4 L734.6,595.2 L735.9,593.0 L737.2,590.8 L738.5,588.6 L739.8,586.4 L741.1,584.2 L742.4,582.0 L743.7,579.9 L745.0,577.7 L746.3,575.5 L747.6,573.3 L748.9,571.1 L750.3,568.9 L751.6,566.7 L752.9,564.5 L754.2,562.3 L755.5,560.1 L756.8,557.9 L758.2,555.7 L759.5,553.5 L760.8,551.3 L762.1,549.1 L763.5,546.9 L764.8,544.7 L766.1,542.5 L767.5,540.3 L768.8,538.1 L770.1,535.9 L771.5,533.7 L772.8,531.5 L774.1,529.3 L775.5,527.1 L776.8,524.9 L778.2,522.7 L779.5,520.5 L780.9,518.3 L782.2,516.1 L783.6,513.9 L784.9,511.7 L786.3,509.5 L787.7,507.4 L789.0,505.2 L790.4,503.0 L791.7,500.8 L793.1,498.6 L794.5,496.4 L795.8,494.2 L797.2,492.0 L798.6,489.8 L800.0,487.6 L801.3,485.4 L802.7,483.2 L804.1,481.0 L805.5,478.8 L806.9,476.6 L808.2,474.4 L809.6,472.2 L811.0,470.0 L812.4,467.8 L813.8,465.6 L815.2,463.4 L816.6,461.2 L818.0,459.0 L819.4,456.8 L820.8,454.6 L822.2,452.4 L823.6,450.2 L825.0,448.0 L826.4,445.8 L827.8,443.6 L829.2,441.4 L830.6,439.2 L832.0,437.1 L833.4,434.9 L834.9,432.7 L836.3,430.5 L837.7,428.3 L839.1,426.1 L840.5,423.9 L842.0,421.7 L843.4,419.5 L844.8,417.3 L846.2,415.1 L847.7,412.9 L849.1,410.7 L850.5,408.5 L852.0,406.3 L853.4,404.1 L854.8,401.9 L856.3,399.7 L857.9,397.4 L859.5,395.1 L861.1,392.8 L862.7,390.4 L864.3,388.1 L865.8,385.8 L867.1,383.6 L868.3,381.5 L869.3,379.5 L870.1,377.7 L870.7,376.0 L871.2,374.4 L871.6,373.0 L871.9,371.7 L872.0,370.4 L872.2,369.2 L872.3,368.0 L872.5,366.8 L872.6,365.5 L872.9,364.1 L873.1,362.5 L873.3,360.9 L873.5,359.2 L873.7,357.6 L873.9,356.0 L874.1,354.4 L874.2,352.9 L874.3,351.5 L874.4,350.1 L874.4,348.9 L874.4,347.8 L874.4,346.8 L874.3,345.8 L874.2,344.8 L874.1,343.9 L873.9,343.0 L873.7,342.2 L873.5,341.4 L873.3,340.5 L872.8,339.6 L872.3,338.7 L871.7,337.9 L871.1,337.1 L870.5,336.3 L869.9,335.6 L869.3,335.0 L868.9,334.4 L868.4,333.9 L868.1,333.5Z" fill="#080808"/>
<path d="M876.4,348.1 L876.4,348.6 L876.6,349.2 L876.7,350.0 L876.8,350.9 L877.0,351.8 L877.1,352.8 L877.3,353.7 L877.3,354.7 L877.4,355.6 L877.5,356.4 L877.6,357.2 L877.7,358.0 L877.8,358.8 L877.9,359.5 L877.9,360.3 L878.0,361.2 L878.0,362.0 L877.9,362.9 L877.9,363.9 L877.8,364.9 L877.7,366.0 L877.6,367.2 L877.4,368.4 L877.3,369.6 L877.1,370.9 L876.8,372.2 L876.6,373.5 L876.3,374.8 L875.9,376.1 L875.6,377.3 L875.2,378.6 L874.8,379.7 L874.4,380.8 L874.1,381.9 L873.6,383.0 L873.2,384.1 L872.6,385.2 L872.0,386.5 L871.2,387.9 L870.2,389.4 L869.2,391.2 L867.9,393.0 L866.5,395.0 L865.0,397.2 L863.5,399.5 L862.0,401.8 L860.4,404.2 L858.8,406.5 L857.2,408.8 L855.8,411.1 L854.3,413.3 L852.9,415.5 L851.5,417.7 L850.1,419.9 L848.6,422.1 L847.2,424.3 L845.8,426.5 L844.4,428.7 L843.0,430.9 L841.6,433.1 L840.2,435.3 L838.7,437.5 L837.3,439.7 L835.9,441.9 L834.5,444.2 L833.1,446.4 L831.7,448.6 L830.3,450.8 L828.9,453.0 L827.5,455.2 L826.1,457.4 L824.8,459.6 L823.4,461.8 L822.0,464.0 L820.6,466.2 L819.2,468.4 L817.8,470.6 L816.4,472.8 L815.1,475.0 L813.7,477.2 L812.3,479.4 L810.9,481.6 L809.6,483.8 L808.2,486.0 L806.8,488.2 L805.5,490.4 L804.1,492.6 L802.7,494.8 L801.4,497.0 L800.0,499.2 L798.6,501.4 L797.3,503.6 L795.9,505.8 L794.6,508.0 L793.2,510.2 L791.9,512.4 L790.5,514.7 L789.2,516.9 L787.8,519.1 L786.5,521.3 L785.1,523.5 L783.8,525.7 L782.5,527.9 L781.1,530.1 L779.8,532.3 L778.5,534.5 L777.1,536.7 L775.8,538.9 L774.5,541.1 L773.1,543.3 L771.8,545.5 L770.5,547.7 L769.2,549.9 L767.8,552.1 L766.5,554.3 L765.2,556.5 L763.9,558.7 L762.6,560.9 L761.3,563.1 L760.0,565.3 L758.7,567.5 L757.3,569.7 L756.0,571.9 L754.7,574.1 L753.4,576.3 L752.1,578.5 L750.8,580.7 L749.5,582.9 L748.2,585.2 L747.0,587.4 L745.7,589.6 L744.4,591.8 L743.1,594.0 L741.8,596.2 L740.5,598.4 L739.2,600.6 L737.9,602.8 L736.7,605.0 L735.4,607.2 L734.1,609.4 L732.8,611.6 L731.6,613.8 L730.3,616.0 L729.0,618.2 L727.8,620.4 L726.5,622.6 L725.2,624.8 L724.0,627.0 L722.7,629.2 L721.4,631.4 L720.2,633.6 L718.9,635.8 L717.7,638.0 L716.4,640.2 L715.2,642.4 L713.9,644.6 L712.7,646.8 L711.4,649.0 L710.2,651.2 L708.9,653.4 L707.7,655.6 L706.5,657.9 L705.2,660.1 L704.0,662.3 L702.7,664.5 L701.5,666.7 L700.3,668.9 L699.0,671.1 L697.8,673.3 L696.6,675.5 L695.4,677.7 L694.1,680.0 L692.8,682.2 L691.6,684.5 L690.3,686.8 L689.1,689.0 L687.9,691.3 L686.7,693.4 L685.5,695.5 L684.4,697.5 L683.3,699.5 L682.2,701.5 L681.1,703.6 L680.0,705.6 L679.0,707.5 L678.0,709.3 L677.1,711.0 L676.3,712.4 L675.6,713.7 L675.0,714.7 L680.5,717.7 L681.0,716.7 L681.7,715.4 L682.5,713.9 L683.4,712.3 L684.4,710.4 L685.5,708.5 L686.5,706.5 L687.7,704.5 L688.8,702.5 L689.9,700.5 L691.0,698.5 L692.1,696.4 L693.3,694.3 L694.5,692.1 L695.8,689.8 L697.0,687.5 L698.3,685.3 L699.6,683.0 L700.8,680.7 L702.1,678.5 L703.3,676.3 L704.5,674.1 L705.8,671.9 L707.0,669.7 L708.2,667.5 L709.5,665.3 L710.7,663.1 L711.9,660.9 L713.2,658.8 L714.4,656.6 L715.7,654.4 L716.9,652.2 L718.2,650.0 L719.4,647.8 L720.7,645.6 L721.9,643.4 L723.2,641.2 L724.4,639.0 L725.7,636.8 L727.0,634.6 L728.2,632.4 L729.5,630.2 L730.8,628.0 L732.0,625.8 L733.3,623.6 L734.6,621.4 L735.8,619.2 L737.1,617.0 L738.4,614.8 L739.7,612.6 L741.0,610.4 L742.2,608.2 L743.5,606.0 L744.8,603.8 L746.1,601.6 L747.4,599.4 L748.7,597.2 L750.0,595.0 L751.3,592.8 L752.5,590.6 L753.8,588.4 L755.1,586.3 L756.4,584.1 L757.7,581.9 L759.0,579.7 L760.4,577.5 L761.7,575.3 L763.0,573.1 L764.3,570.9 L765.6,568.7 L766.9,566.5 L768.2,564.3 L769.5,562.1 L770.9,559.9 L772.2,557.7 L773.5,555.5 L774.8,553.3 L776.1,551.1 L777.5,548.9 L778.8,546.7 L780.1,544.5 L781.5,542.3 L782.8,540.1 L784.1,537.9 L785.5,535.7 L786.8,533.5 L788.1,531.3 L789.5,529.1 L790.8,526.9 L792.2,524.7 L793.5,522.5 L794.9,520.3 L796.2,518.1 L797.6,516.0 L798.9,513.8 L800.3,511.6 L801.6,509.4 L803.0,507.2 L804.4,505.0 L805.7,502.8 L807.1,500.6 L808.4,498.4 L809.8,496.2 L811.2,494.0 L812.6,491.8 L813.9,489.6 L815.3,487.4 L816.7,485.2 L818.1,483.0 L819.4,480.8 L820.8,478.6 L822.2,476.4 L823.6,474.2 L825.0,472.0 L826.4,469.8 L827.7,467.6 L829.1,465.4 L830.5,463.2 L831.9,461.0 L833.3,458.8 L834.7,456.6 L836.1,454.4 L837.5,452.2 L838.9,450.0 L840.3,447.8 L841.7,445.7 L843.1,443.5 L844.5,441.3 L846.0,439.1 L847.4,436.9 L848.8,434.7 L850.2,432.5 L851.6,430.3 L853.0,428.1 L854.5,425.9 L855.9,423.7 L857.3,421.5 L858.7,419.3 L860.2,417.1 L861.6,414.9 L863.0,412.7 L864.6,410.4 L866.2,408.1 L867.7,405.7 L869.3,403.4 L870.9,401.1 L872.3,398.8 L873.6,396.6 L874.8,394.5 L875.8,392.6 L876.7,390.8 L877.4,389.2 L878.1,387.7 L878.6,386.2 L879.1,384.9 L879.4,383.6 L879.8,382.4 L880.1,381.2 L880.4,380.0 L880.6,378.7 L880.9,377.3 L881.2,375.8 L881.4,374.4 L881.6,373.0 L881.7,371.6 L881.9,370.2 L882.0,368.8 L882.1,367.5 L882.1,366.3 L882.2,365.1 L882.2,364.0 L882.2,363.0 L882.2,361.9 L882.1,361.0 L882.1,360.0 L882.0,359.1 L881.8,358.2 L881.7,357.4 L881.5,356.5 L881.3,355.6 L881.0,354.6 L880.5,353.7 L880.0,352.8 L879.4,351.9 L878.8,351.1 L878.3,350.3 L877.8,349.6 L877.3,348.9 L876.9,348.4 L876.6,347.9Z" fill="#080808"/>
<path d="M883.9,362.6 L883.9,363.1 L884.1,363.8 L884.2,364.7 L884.4,365.7 L884.6,366.7 L884.7,367.8 L884.9,368.8 L885.0,369.8 L885.1,370.7 L885.3,371.5 L885.4,372.2 L885.6,372.8 L885.6,373.4 L885.7,373.9 L885.8,374.4 L885.8,374.9 L885.8,375.5 L885.7,376.1 L885.7,376.9 L885.6,377.8 L885.4,378.8 L885.2,379.9 L885.0,381.1 L884.8,382.4 L884.6,383.7 L884.3,385.0 L883.9,386.4 L883.6,387.7 L883.2,389.0 L882.7,390.3 L882.3,391.5 L881.9,392.6 L881.5,393.7 L881.0,394.8 L880.6,395.9 L880.1,397.0 L879.5,398.2 L878.8,399.5 L877.9,400.9 L877.0,402.4 L875.9,404.2 L874.6,406.1 L873.2,408.1 L871.7,410.2 L870.2,412.5 L868.7,414.8 L867.1,417.2 L865.5,419.5 L864.0,421.8 L862.5,424.1 L861.1,426.3 L859.7,428.5 L858.3,430.7 L856.9,432.9 L855.5,435.1 L854.1,437.3 L852.6,439.5 L851.2,441.7 L849.8,443.9 L848.4,446.1 L847.0,448.3 L845.6,450.6 L844.2,452.8 L842.9,455.0 L841.5,457.2 L840.1,459.4 L838.7,461.6 L837.3,463.8 L835.9,466.0 L834.5,468.2 L833.1,470.4 L831.8,472.6 L830.4,474.8 L829.0,477.0 L827.6,479.2 L826.2,481.4 L824.9,483.6 L823.5,485.8 L822.1,488.0 L820.8,490.2 L819.4,492.4 L818.0,494.6 L816.7,496.8 L815.3,499.0 L814.0,501.2 L812.6,503.4 L811.2,505.6 L809.9,507.8 L808.5,510.0 L807.2,512.2 L805.8,514.4 L804.5,516.6 L803.1,518.8 L801.8,521.1 L800.5,523.3 L799.1,525.5 L797.8,527.7 L796.4,529.9 L795.1,532.1 L793.8,534.3 L792.4,536.5 L791.1,538.7 L789.8,540.9 L788.4,543.1 L787.1,545.3 L785.8,547.5 L784.5,549.7 L783.2,551.9 L781.8,554.1 L780.5,556.3 L779.2,558.5 L777.9,560.7 L776.6,562.9 L775.3,565.1 L774.0,567.3 L772.6,569.5 L771.3,571.7 L770.0,573.9 L768.7,576.1 L767.4,578.3 L766.1,580.5 L764.8,582.7 L763.5,584.9 L762.3,587.1 L761.0,589.3 L759.7,591.6 L758.4,593.8 L757.1,596.0 L755.8,598.2 L754.5,600.4 L753.2,602.6 L752.0,604.8 L750.7,607.0 L749.4,609.2 L748.1,611.4 L746.9,613.6 L745.6,615.8 L744.3,618.0 L743.0,620.2 L741.8,622.4 L740.5,624.6 L739.3,626.8 L738.0,629.0 L736.7,631.2 L735.5,633.4 L734.2,635.6 L733.0,637.8 L731.7,640.0 L730.5,642.2 L729.2,644.4 L728.0,646.6 L726.7,648.8 L725.5,651.0 L724.2,653.2 L723.0,655.4 L721.7,657.6 L720.5,659.8 L719.3,662.0 L718.0,664.3 L716.8,666.5 L715.6,668.7 L714.3,670.9 L713.1,673.1 L711.9,675.3 L710.7,677.5 L709.4,679.7 L708.2,681.9 L707.0,684.1 L705.8,686.3 L704.6,688.5 L703.3,690.7 L702.0,693.1 L700.7,695.4 L699.4,697.8 L698.1,700.2 L696.9,702.5 L695.7,704.7 L694.5,706.8 L693.5,708.8 L692.5,710.5 L691.6,712.1 L690.8,713.6 L690.1,714.9 L689.4,716.1 L688.8,717.3 L688.3,718.3 L687.8,719.2 L687.4,720.0 L687.0,720.7 L686.7,721.3 L692.1,724.2 L692.4,723.6 L692.8,722.9 L693.2,722.1 L693.7,721.2 L694.3,720.2 L694.9,719.1 L695.6,717.9 L696.3,716.5 L697.1,715.1 L698.0,713.5 L698.9,711.7 L700.0,709.8 L701.1,707.7 L702.3,705.5 L703.6,703.2 L704.9,700.8 L706.2,698.5 L707.5,696.1 L708.8,693.8 L710.1,691.5 L711.3,689.3 L712.5,687.1 L713.7,684.9 L714.9,682.7 L716.2,680.5 L717.4,678.3 L718.6,676.1 L719.9,673.9 L721.1,671.7 L722.3,669.5 L723.6,667.3 L724.8,665.2 L726.0,663.0 L727.3,660.8 L728.5,658.6 L729.8,656.4 L731.0,654.2 L732.3,652.0 L733.5,649.8 L734.8,647.6 L736.0,645.4 L737.3,643.2 L738.5,641.0 L739.8,638.8 L741.0,636.6 L742.3,634.4 L743.6,632.2 L744.8,630.0 L746.1,627.8 L747.4,625.6 L748.6,623.4 L749.9,621.2 L751.2,619.0 L752.5,616.8 L753.7,614.6 L755.0,612.4 L756.3,610.2 L757.6,608.0 L758.9,605.8 L760.1,603.6 L761.4,601.4 L762.7,599.2 L764.0,597.0 L765.3,594.8 L766.6,592.7 L767.9,590.5 L769.2,588.3 L770.5,586.1 L771.8,583.9 L773.1,581.7 L774.4,579.5 L775.7,577.3 L777.0,575.1 L778.3,572.9 L779.6,570.7 L780.9,568.5 L782.2,566.3 L783.6,564.1 L784.9,561.9 L786.2,559.7 L787.5,557.5 L788.8,555.3 L790.2,553.1 L791.5,550.9 L792.8,548.7 L794.1,546.5 L795.5,544.3 L796.8,542.1 L798.1,539.9 L799.5,537.7 L800.8,535.5 L802.1,533.3 L803.5,531.1 L804.8,528.9 L806.2,526.7 L807.5,524.5 L808.9,522.4 L810.2,520.2 L811.6,518.0 L812.9,515.8 L814.3,513.6 L815.6,511.4 L817.0,509.2 L818.3,507.0 L819.7,504.8 L821.1,502.6 L822.4,500.4 L823.8,498.2 L825.2,496.0 L826.5,493.8 L827.9,491.6 L829.3,489.4 L830.6,487.2 L832.0,485.0 L833.4,482.8 L834.8,480.6 L836.2,478.4 L837.5,476.2 L838.9,474.0 L840.3,471.8 L841.7,469.6 L843.1,467.4 L844.5,465.2 L845.9,463.0 L847.3,460.8 L848.7,458.6 L850.1,456.4 L851.5,454.2 L852.9,452.1 L854.3,449.9 L855.7,447.7 L857.1,445.5 L858.5,443.3 L859.9,441.1 L861.3,438.9 L862.7,436.7 L864.1,434.5 L865.5,432.3 L867.0,430.1 L868.4,427.9 L869.8,425.7 L871.3,423.4 L872.9,421.1 L874.5,418.7 L876.0,416.4 L877.6,414.1 L879.0,411.8 L880.3,409.6 L881.4,407.5 L882.5,405.6 L883.4,403.8 L884.1,402.2 L884.8,400.7 L885.3,399.3 L885.8,398.0 L886.3,396.7 L886.6,395.5 L887.0,394.3 L887.3,393.0 L887.7,391.7 L888.0,390.3 L888.3,388.9 L888.6,387.4 L888.9,386.0 L889.1,384.5 L889.3,383.1 L889.5,381.8 L889.6,380.5 L889.8,379.3 L889.8,378.2 L889.9,377.2 L889.9,376.3 L889.9,375.5 L889.9,374.8 L889.9,374.0 L889.8,373.3 L889.6,372.7 L889.5,372.0 L889.3,371.3 L889.1,370.5 L888.8,369.6 L888.4,368.7 L887.8,367.8 L887.2,366.8 L886.6,365.9 L886.0,365.0 L885.4,364.2 L884.9,363.5 L884.5,362.9 L884.1,362.4Z" fill="#080808"/>
</svg>
<div class="a" style="left:14px;top:7px;width:16px;height:15px;box-sizing:border-box;border:1px solid #3cc4ea;background:#04203a;color:#45c0ee;font-size:9.5px;line-height:13px;text-align:center;letter-spacing:0px;">Ps</div>
<div class="mi" style="left:50px">文件(F)</div>
<div class="mi" style="left:104px">编辑(E)</div>
<div class="mi" style="left:158px">图像(I)</div>
<div class="mi" style="left:209px">图层(L)</div>
<div class="mi" style="left:263px">文字(Y)</div>
<div class="mi" style="left:318px">选择(S)</div>
<div class="mi" style="left:372px">滤镜(T)</div>
<div class="mi" style="left:426px">3D(D)</div>
<div class="mi" style="left:471px">视图(V)</div>
<div class="mi" style="left:526px">窗口(W)</div>
<div class="mi" style="left:585px">帮助(H)</div>
<div class="a" style="left:1618px;top:-1px;width:103px;height:20px;box-sizing:border-box;border:1px solid #5f5f5f;border-radius:0 0 3px 3px;"></div>
<div class="a" style="left:1646px;top:0px;width:1px;height:19px;background:#5c5c5c;"></div>
<div class="a" style="left:1674px;top:0px;width:1px;height:19px;background:#5c5c5c;"></div>
<div class="a" style="left:1627px;top:12px;width:10px;height:3px;background:#bdbdbd;"></div>
<div class="a" style="left:1655px;top:6px;width:10px;height:9px;box-sizing:border-box;border:2px solid #bdbdbd;"></div>
<svg style="left:1691px;top:5px" width="12" height="10" viewBox="0 0 12 10"><path d="M1,0.5 L10.5,9.5 M10.5,0.5 L1,9.5" stroke="#c4c4c4" stroke-width="2.2" fill="none"/></svg>
<div class="a" style="left:10px;top:40px;width:4px;height:19px;background:repeating-linear-gradient(to bottom,#484848 0,#484848 1px,transparent 1px,transparent 2px);"></div>
<svg style="left:25px;top:41px" width="16" height="16" viewBox="0 0 16 16"><path d="M8,0.3 L10.6,3.4 H8.65 V7.35 H12.6 V5.4 L15.7,8 L12.6,10.6 V8.65 H8.65 V12.6 H10.6 L8,15.7 L5.4,12.6 H7.35 V8.65 H3.4 V10.6 L0.3,8 L3.4,5.4 V7.35 H7.35 V3.4 H5.4 Z" fill="#d6d6d6"/></svg>
<svg style="left:49px;top:47px" width="9" height="6" viewBox="0 0 9 6"><path d="M1,1 L4.5,5 L8,1" stroke="#b4b4b4" stroke-width="1.0" fill="none"/></svg>
<div class="a" style="left:66px;top:38px;width:1px;height:23px;background:#454545;"></div>
<div class="a" style="left:73px;top:42px;width:13px;height:13px;background:#dadada;border-radius:2px;"></div>
<svg style="left:73px;top:42px" width="13" height="13" viewBox="0 0 13 13"><path d="M3,6.3 L5.6,9 L10.2,3.6" stroke="#222" stroke-width="1.8" fill="none"/></svg>
<div class="t" style="left:93px;top:43px;color:#e0e0e0;">自动选择：</div>
<div class="a" style="left:158px;top:39px;width:57px;height:21px;box-sizing:border-box;background:#454545;border:1px solid #666;border-radius:3px;"></div>
<div class="t" style="left:166px;top:43px;color:#f0f0f0;">图层</div>
<svg style="left:200px;top:47px" width="9" height="6" viewBox="0 0 9 6"><path d="M1,1 L4.5,5 L8,1" stroke="#c8c8c8" stroke-width="1.0" fill="none"/></svg>
<div class="a" style="left:223px;top:38px;width:1px;height:23px;background:#454545;"></div>
<div class="a" style="left:232px;top:42px;width:13px;height:13px;box-sizing:border-box;background:#454545;border:1px solid #6a6a6a;border-radius:2px;"></div>
<div class="t" style="left:251px;top:43px;color:#e0e0e0;">显示变换控件</div>
<div class="a" style="left:338px;top:38px;width:1px;height:23px;background:#454545;"></div>
<svg style="left:351px;top:40px" width="16" height="18" viewBox="0 0 16 18"><rect x="1" y="2" width="14" height="1.5" fill="#a9a9a9"/><rect x="3" y="5" width="4" height="10" fill="#a9a9a9"/><rect x="9" y="5" width="4" height="6" fill="#a9a9a9"/></svg>
<svg style="left:377px;top:40px" width="16" height="18" viewBox="0 0 16 18"><rect x="1" y="8" width="14" height="1.5" fill="#a9a9a9"/><rect x="3" y="3" width="4" height="12" fill="#a9a9a9"/><rect x="9" y="5" width="4" height="8" fill="#a9a9a9"/></svg>
<svg style="left:403px;top:40px" width="16" height="18" viewBox="0 0 16 18"><rect x="1" y="14.5" width="14" height="1.5" fill="#a9a9a9"/><rect x="3" y="3" width="4" height="10" fill="#a9a9a9"/><rect x="9" y="7" width="4" height="6" fill="#a9a9a9"/></svg>
<svg style="left:437px;top:40px" width="16" height="18" viewBox="0 0 16 18"><rect x="1" y="2" width="1.5" height="14" fill="#a9a9a9"/><rect x="4" y="4" width="10" height="4" fill="#a9a9a9"/><rect x="4" y="10" width="6" height="4" fill="#a9a9a9"/></svg>
<svg style="left:463px;top:40px" width="16" height="18" viewBox="0 0 16 18"><rect x="7.3" y="2" width="1.5" height="14" fill="#a9a9a9"/><rect x="2" y="4" width="12" height="4" fill="#a9a9a9"/><rect x="4" y="10" width="8" height="4" fill="#a9a9a9"/></svg>
<svg style="left:489px;top:40px" width="16" height="18" viewBox="0 0 16 18"><rect x="13.5" y="2" width="1.5" height="14" fill="#a9a9a9"/><rect x="2" y="4" width="10" height="4" fill="#a9a9a9"/><rect x="6" y="10" width="6" height="4" fill="#a9a9a9"/></svg>
<svg style="left:531px;top:40px" width="16" height="18" viewBox="0 0 16 18"><rect x="1" y="3" width="14" height="1.5" fill="#a9a9a9"/><rect x="4" y="4.5" width="8" height="3.5" fill="#a9a9a9"/><rect x="1" y="11" width="14" height="1.5" fill="#a9a9a9"/><rect x="4" y="12.5" width="8" height="3.5" fill="#a9a9a9"/></svg>
<svg style="left:557px;top:40px" width="16" height="18" viewBox="0 0 16 18"><rect x="1" y="5" width="14" height="1.5" fill="#a9a9a9"/><rect x="4" y="3" width="8" height="5" fill="#a9a9a9"/><rect x="1" y="13" width="14" height="1.5" fill="#a9a9a9"/><rect x="4" y="11" width="8" height="5" fill="#a9a9a9"/></svg>
<svg style="left:583px;top:40px" width="16" height="18" viewBox="0 0 16 18"><rect x="1" y="7" width="14" height="1.5" fill="#a9a9a9"/><rect x="4" y="3.5" width="8" height="3.5" fill="#a9a9a9"/><rect x="1" y="15" width="14" height="1.5" fill="#a9a9a9"/><rect x="4" y="11.5" width="8" height="3.5" fill="#a9a9a9"/></svg>
<svg style="left:617px;top:40px" width="16" height="18" viewBox="0 0 16 18"><rect x="3" y="2" width="1.5" height="14" fill="#a9a9a9"/><rect x="4.5" y="5" width="3.5" height="8" fill="#a9a9a9"/><rect x="10" y="2" width="1.5" height="14" fill="#a9a9a9"/><rect x="11.5" y="5" width="3.5" height="8" fill="#a9a9a9"/></svg>
<svg style="left:643px;top:40px" width="16" height="18" viewBox="0 0 16 18"><rect x="4" y="2" width="1.5" height="14" fill="#a9a9a9"/><rect x="2.5" y="5" width="5" height="8" fill="#a9a9a9"/><rect x="11" y="2" width="1.5" height="14" fill="#a9a9a9"/><rect x="9.5" y="5" width="5" height="8" fill="#a9a9a9"/></svg>
<svg style="left:669px;top:40px" width="16" height="18" viewBox="0 0 16 18"><rect x="6" y="2" width="1.5" height="14" fill="#a9a9a9"/><rect x="2.5" y="5" width="3.5" height="8" fill="#a9a9a9"/><rect x="13" y="2" width="1.5" height="14" fill="#a9a9a9"/><rect x="9.5" y="5" width="3.5" height="8" fill="#a9a9a9"/></svg>
<svg style="left:713px;top:40px" width="16" height="18" viewBox="0 0 16 18"><rect x="3" y="2" width="4" height="4" fill="#a9a9a9"/><rect x="3" y="7" width="4" height="9" fill="#a9a9a9"/><rect x="9" y="2" width="4" height="4" fill="#a9a9a9"/><rect x="9" y="7" width="4" height="9" fill="#a9a9a9"/></svg>
<div class="a" style="left:518px;top:38px;width:1px;height:23px;background:#454545;"></div>
<div class="a" style="left:700px;top:38px;width:1px;height:23px;background:#454545;"></div>
<div class="a" style="left:742px;top:38px;width:1px;height:23px;background:#454545;"></div>
<div class="t" style="left:752px;top:43px;color:#7e7e7e;">3D 模式：</div>
<svg style="left:815px;top:40px" width="18" height="18" viewBox="0 0 18 18"><ellipse cx="8" cy="9.5" rx="6.5" ry="3.3" fill="none" stroke="#7f7f7f" stroke-width="1.4"/><circle cx="10" cy="6" r="3.6" fill="#535353" stroke="#7f7f7f" stroke-width="1.4"/><path d="M2,13 l3,0 l-1.5,2.5z M12,14 l4,0.5 l-2,-3z" fill="#7f7f7f"/></svg>
<svg style="left:841px;top:40px" width="18" height="18" viewBox="0 0 18 18"><circle cx="9" cy="9" r="7" fill="none" stroke="#7f7f7f" stroke-width="1.3"/><circle cx="9" cy="9.5" r="3.6" fill="none" stroke="#7f7f7f" stroke-width="1.3"/><path d="M3,2 l4,0.5 l-3,3z" fill="#7f7f7f"/></svg>
<svg style="left:867px;top:40px" width="18" height="18" viewBox="0 0 18 18"><path d="M9,1 L11.5,4 H10 V8 H14 V6.5 L17,9 L14,11.5 V10 H10 V14 H11.5 L9,17 L6.5,14 H8 V10 H4 V11.5 L1,9 L4,6.5 V8 H8 V4 H6.5 Z" fill="none" stroke="#7f7f7f" stroke-width="1"/></svg>
<svg style="left:893px;top:40px" width="18" height="18" viewBox="0 0 18 18"><path d="M9,1 L11.5,4.2 H6.5 Z M9,17 L11.5,13.8 H6.5 Z M1,9 L4.2,6.5 V11.5 Z M17,9 L13.8,6.5 V11.5 Z" fill="#7f7f7f"/><path d="M9,5.5 L12.5,9 L9,12.5 L5.5,9 Z" fill="#7f7f7f"/></svg>
<svg style="left:918px;top:40px" width="20" height="18" viewBox="0 0 20 18"><rect x="1" y="6" width="9" height="7" fill="#7f7f7f"/><path d="M10,9.5 L14,6 V13 Z" fill="#7f7f7f"/><path d="M18.5,4.5 L15.5,9.5 L18.5,14.5" fill="none" stroke="#7f7f7f" stroke-width="1"/></svg>
<svg style="left:1620px;top:40px" width="18" height="18" viewBox="0 0 18 18"><circle cx="10.5" cy="7.5" r="5.3" fill="none" stroke="#d0d0d0" stroke-width="1.6"/><path d="M6.6,11.4 L2,16" stroke="#d0d0d0" stroke-width="2.2"/></svg>
<svg style="left:1650px;top:42px" width="18" height="15" viewBox="0 0 18 15"><rect x="1" y="1.5" width="15.5" height="12" fill="none" stroke="#d0d0d0" stroke-width="1.3"/><rect x="1" y="1" width="15.5" height="2" fill="#d0d0d0"/><rect x="3" y="5" width="3" height="6.5" fill="none" stroke="#d0d0d0" stroke-width="1"/></svg>
<svg style="left:1676px;top:47px" width="9" height="6" viewBox="0 0 9 6"><path d="M1,1 L4.5,5 L8,1" stroke="#b4b4b4" stroke-width="1.0" fill="none"/></svg>
<svg style="left:1697px;top:39px" width="17" height="18" viewBox="0 0 17 18"><path d="M5,7.5 H1.5 V16.5 H15.5 V7.5 H12" fill="none" stroke="#d0d0d0" stroke-width="1.3"/><path d="M8.5,11 V1.5 M5.5,4.5 L8.5,1.3 L11.5,4.5" fill="none" stroke="#d0d0d0" stroke-width="1.3"/></svg>
<div class="t" style="left:55px;top:74px;color:#e4e4e4;">未标题-1 @ 50% (背景, RGB/8#) *</div>
<svg style="left:249px;top:77px" width="8" height="8" viewBox="0 0 8 8"><path d="M1,1 L7,7 M7,1 L1,7" stroke="#bdbdbd" stroke-width="1.6" fill="none"/></svg>
<svg style="left:9px;top:70px" width="8" height="5" viewBox="0 0 8 5"><path d="M0.4,0.2 L3,2.5 L0.4,4.8 Z M4.4,0.2 L7,2.5 L4.4,4.8 Z" fill="#c4c4c4"/></svg>
<div class="a" style="left:13px;top:81px;width:20px;height:5px;background:repeating-linear-gradient(to right,#474747 0,#474747 1px,transparent 1px,transparent 2px);"></div>
<svg style="left:0;top:0" width="1728" height="952" viewBox="0 0 1728 952" shape-rendering="crispEdges">
<rect x="45" y="96" width="17" height="16" fill="#4a4a4a"/><path d="M93.5,96 V112 M164.5,96 V112 M235.5,96 V112 M305.5,96 V112 M376.5,96 V112 M447.5,96 V112 M518.5,96 V112 M589.5,96 V112 M660.5,96 V112 M731.5,96 V112 M801.5,96 V112 M872.5,96 V112 M943.5,96 V112 M1014.5,96 V112 M1085.5,96 V112 M1156.5,96 V112 M1227.5,96 V112 M1298.5,96 V112 M1368.5,96 V112 " stroke="#7e7e7e" stroke-width="1" fill="none"/><path d="M64.5,107 V112 M72.5,108 V112 M79.5,107 V112 M86.5,108 V112 M100.5,108 V112 M107.5,107 V112 M114.5,108 V112 M121.5,107 V112 M128.5,108 V112 M135.5,107 V112 M142.5,108 V112 M149.5,107 V112 M157.5,108 V112 M171.5,108 V112 M178.5,107 V112 M185.5,108 V112 M192.5,107 V112 M199.5,108 V112 M206.5,107 V112 M213.5,108 V112 M220.5,107 V112 M227.5,108 V112 M242.5,108 V112 M249.5,107 V112 M256.5,108 V112 M263.5,107 V112 M270.5,108 V112 M277.5,107 V112 M284.5,108 V112 M291.5,107 V112 M298.5,108 V112 M312.5,108 V112 M320.5,107 V112 M327.5,108 V112 M334.5,107 V112 M341.5,108 V112 M348.5,107 V112 M355.5,108 V112 M362.5,107 V112 M369.5,108 V112 M383.5,108 V112 M390.5,107 V112 M398.5,108 V112 M405.5,107 V112 M412.5,108 V112 M419.5,107 V112 M426.5,108 V112 M433.5,107 V112 M440.5,108 V112 M454.5,108 V112 M461.5,107 V112 M468.5,108 V112 M475.5,107 V112 M483.5,108 V112 M490.5,107 V112 M497.5,108 V112 M504.5,107 V112 M511.5,108 V112 M525.5,108 V112 M532.5,107 V112 M539.5,108 V112 M546.5,107 V112 M553.5,108 V112 M561.5,107 V112 M568.5,108 V112 M575.5,107 V112 M582.5,108 V112 M596.5,108 V112 M603.5,107 V112 M610.5,108 V112 M617.5,107 V112 M624.5,108 V112 M631.5,107 V112 M638.5,108 V112 M646.5,107 V112 M653.5,108 V112 M667.5,108 V112 M674.5,107 V112 M681.5,108 V112 M688.5,107 V112 M695.5,108 V112 M702.5,107 V112 M709.5,108 V112 M716.5,107 V112 M724.5,108 V112 M738.5,108 V112 M745.5,107 V112 M752.5,108 V112 M759.5,107 V112 M766.5,108 V112 M773.5,107 V112 M780.5,108 V112 M787.5,107 V112 M794.5,108 V112 M809.5,108 V112 M816.5,107 V112 M823.5,108 V112 M830.5,107 V112 M837.5,108 V112 M844.5,107 V112 M851.5,108 V112 M858.5,107 V112 M865.5,108 V112 M879.5,108 V112 M887.5,107 V112 M894.5,108 V112 M901.5,107 V112 M908.5,108 V112 M915.5,107 V112 M922.5,108 V112 M929.5,107 V112 M936.5,108 V112 M950.5,108 V112 M957.5,107 V112 M964.5,108 V112 M972.5,107 V112 M979.5,108 V112 M986.5,107 V112 M993.5,108 V112 M1000.5,107 V112 M1007.5,108 V112 M1021.5,108 V112 M1028.5,107 V112 M1035.5,108 V112 M1042.5,107 V112 M1049.5,108 V112 M1057.5,107 V112 M1064.5,108 V112 M1071.5,107 V112 M1078.5,108 V112 M1092.5,108 V112 M1099.5,107 V112 M1106.5,108 V112 M1113.5,107 V112 M1120.5,108 V112 M1127.5,107 V112 M1135.5,108 V112 M1142.5,107 V112 M1149.5,108 V112 M1163.5,108 V112 M1170.5,107 V112 M1177.5,108 V112 M1184.5,107 V112 M1191.5,108 V112 M1198.5,107 V112 M1205.5,108 V112 M1212.5,107 V112 M1220.5,108 V112 M1234.5,108 V112 M1241.5,107 V112 M1248.5,108 V112 M1255.5,107 V112 M1262.5,108 V112 M1269.5,107 V112 M1276.5,108 V112 M1283.5,107 V112 M1290.5,108 V112 M1305.5,108 V112 M1312.5,107 V112 M1319.5,108 V112 M1326.5,107 V112 M1333.5,108 V112 M1340.5,107 V112 M1347.5,108 V112 M1354.5,107 V112 M1361.5,108 V112 M1375.5,108 V112 M1383.5,107 V112 M1390.5,108 V112 M1397.5,107 V112 M1404.5,108 V112 M1411.5,107 V112 " stroke="#6e6e6e" stroke-width="1" fill="none"/><path d="M45,130.5 H62 M45,201.5 H62 M45,272.5 H62 M45,343.5 H62 M45,414.5 H62 M45,484.5 H62 M45,555.5 H62 M45,626.5 H62 M45,697.5 H62 M45,768.5 H62 M45,839.5 H62 " stroke="#7e7e7e" stroke-width="1" fill="none"/><path d="M57,116.5 H62 M58,123.5 H62 M58,137.5 H62 M57,144.5 H62 M58,151.5 H62 M57,158.5 H62 M58,166.5 H62 M57,173.5 H62 M58,180.5 H62 M57,187.5 H62 M58,194.5 H62 M58,208.5 H62 M57,215.5 H62 M58,222.5 H62 M57,229.5 H62 M58,236.5 H62 M57,244.5 H62 M58,251.5 H62 M57,258.5 H62 M58,265.5 H62 M58,279.5 H62 M57,286.5 H62 M58,293.5 H62 M57,300.5 H62 M58,307.5 H62 M57,314.5 H62 M58,321.5 H62 M57,329.5 H62 M58,336.5 H62 M58,350.5 H62 M57,357.5 H62 M58,364.5 H62 M57,371.5 H62 M58,378.5 H62 M57,385.5 H62 M58,392.5 H62 M57,399.5 H62 M58,407.5 H62 M58,421.5 H62 M57,428.5 H62 M58,435.5 H62 M57,442.5 H62 M58,449.5 H62 M57,456.5 H62 M58,463.5 H62 M57,470.5 H62 M58,477.5 H62 M58,492.5 H62 M57,499.5 H62 M58,506.5 H62 M57,513.5 H62 M58,520.5 H62 M57,527.5 H62 M58,534.5 H62 M57,541.5 H62 M58,548.5 H62 M58,562.5 H62 M57,570.5 H62 M58,577.5 H62 M57,584.5 H62 M58,591.5 H62 M57,598.5 H62 M58,605.5 H62 M57,612.5 H62 M58,619.5 H62 M58,633.5 H62 M57,640.5 H62 M58,647.5 H62 M57,655.5 H62 M58,662.5 H62 M57,669.5 H62 M58,676.5 H62 M57,683.5 H62 M58,690.5 H62 M58,704.5 H62 M57,711.5 H62 M58,718.5 H62 M57,725.5 H62 M58,732.5 H62 M57,740.5 H62 M58,747.5 H62 M57,754.5 H62 M58,761.5 H62 M58,775.5 H62 M57,782.5 H62 M58,789.5 H62 M57,796.5 H62 M58,803.5 H62 M57,810.5 H62 M58,818.5 H62 M57,825.5 H62 M58,832.5 H62 M58,846.5 H62 M57,853.5 H62 M58,860.5 H62 M57,867.5 H62 M58,874.5 H62 M57,881.5 H62 M58,888.5 H62 M57,895.5 H62 " stroke="#6e6e6e" stroke-width="1" fill="none"/><path d="M47.5,106 V111 M49.5,106 V111 M51.5,106 V111 M53.5,106 V111 M55.5,106 V111 M57.5,97 V111 M59.5,97 V111" stroke="#555555" stroke-width="1" stroke-dasharray="1,1" fill="none"/><path d="M306.5,96 V112" stroke="#d8d8d8" stroke-width="1" stroke-dasharray="1,1" fill="none"/><path d="M45,252.5 H62" stroke="#d8d8d8" stroke-width="1" stroke-dasharray="1,1" fill="none"/></svg>
<div class="t" style="left:97.3px;top:99.5px;font-size:9.5px;letter-spacing:-0.2px;line-height:12px;height:12px;color:#a4a4a4;">30</div>
<div class="t" style="left:168.2px;top:99.5px;font-size:9.5px;letter-spacing:-0.2px;line-height:12px;height:12px;color:#a4a4a4;">25</div>
<div class="t" style="left:239.0px;top:99.5px;font-size:9.5px;letter-spacing:-0.2px;line-height:12px;height:12px;color:#a4a4a4;">20</div>
<div class="t" style="left:309.9px;top:99.5px;font-size:9.5px;letter-spacing:-0.2px;line-height:12px;height:12px;color:#a4a4a4;">15</div>
<div class="t" style="left:380.8px;top:99.5px;font-size:9.5px;letter-spacing:-0.2px;line-height:12px;height:12px;color:#a4a4a4;">10</div>
<div class="t" style="left:451.6px;top:99.5px;font-size:9.5px;letter-spacing:-0.2px;line-height:12px;height:12px;color:#a4a4a4;">5</div>
<div class="t" style="left:522.5px;top:99.5px;font-size:9.5px;letter-spacing:-0.2px;line-height:12px;height:12px;color:#a4a4a4;">0</div>
<div class="t" style="left:593.4px;top:99.5px;font-size:9.5px;letter-spacing:-0.2px;line-height:12px;height:12px;color:#a4a4a4;">5</div>
<div class="t" style="left:664.2px;top:99.5px;font-size:9.5px;letter-spacing:-0.2px;line-height:12px;height:12px;color:#a4a4a4;">10</div>
<div class="t" style="left:735.1px;top:99.5px;font-size:9.5px;letter-spacing:-0.2px;line-height:12px;height:12px;color:#a4a4a4;">15</div>
<div class="t" style="left:806.0px;top:99.5px;font-size:9.5px;letter-spacing:-0.2px;line-height:12px;height:12px;color:#a4a4a4;">20</div>
<div class="t" style="left:876.8px;top:99.5px;font-size:9.5px;letter-spacing:-0.2px;line-height:12px;height:12px;color:#a4a4a4;">25</div>
<div class="t" style="left:947.7px;top:99.5px;font-size:9.5px;letter-spacing:-0.2px;line-height:12px;height:12px;color:#a4a4a4;">30</div>
<div class="t" style="left:1018.6px;top:99.5px;font-size:9.5px;letter-spacing:-0.2px;line-height:12px;height:12px;color:#a4a4a4;">35</div>
<div class="t" style="left:1089.4px;top:99.5px;font-size:9.5px;letter-spacing:-0.2px;line-height:12px;height:12px;color:#a4a4a4;">40</div>
<div class="t" style="left:1160.3px;top:99.5px;font-size:9.5px;letter-spacing:-0.2px;line-height:12px;height:12px;color:#a4a4a4;">45</div>
<div class="t" style="left:47px;top:132.1px;width:8px;text-align:center;font-size:10px;line-height:12px;height:12px;color:#a4a4a4;">5</div>
<div class="t" style="left:47px;top:203.0px;width:8px;text-align:center;font-size:10px;line-height:12px;height:12px;color:#a4a4a4;">0</div>
<div class="t" style="left:47px;top:273.9px;width:8px;text-align:center;font-size:10px;line-height:12px;height:12px;color:#a4a4a4;">5</div>
<div class="t" style="left:47px;top:344.7px;width:8px;text-align:center;font-size:10px;line-height:12px;height:12px;color:#a4a4a4;">1</div>
<div class="t" style="left:47px;top:355.2px;width:8px;text-align:center;font-size:10px;line-height:12px;height:12px;color:#a4a4a4;">0</div>
<div class="t" style="left:47px;top:415.6px;width:8px;text-align:center;font-size:10px;line-height:12px;height:12px;color:#a4a4a4;">1</div>
<div class="t" style="left:47px;top:426.1px;width:8px;text-align:center;font-size:10px;line-height:12px;height:12px;color:#a4a4a4;">5</div>
<div class="t" style="left:47px;top:486.5px;width:8px;text-align:center;font-size:10px;line-height:12px;height:12px;color:#a4a4a4;">2</div>
<div class="t" style="left:47px;top:497.0px;width:8px;text-align:center;font-size:10px;line-height:12px;height:12px;color:#a4a4a4;">0</div>
<div class="t" style="left:47px;top:557.3px;width:8px;text-align:center;font-size:10px;line-height:12px;height:12px;color:#a4a4a4;">2</div>
<div class="t" style="left:47px;top:567.8px;width:8px;text-align:center;font-size:10px;line-height:12px;height:12px;color:#a4a4a4;">5</div>
<div class="t" style="left:47px;top:628.2px;width:8px;text-align:center;font-size:10px;line-height:12px;height:12px;color:#a4a4a4;">3</div>
<div class="t" style="left:47px;top:638.7px;width:8px;text-align:center;font-size:10px;line-height:12px;height:12px;color:#a4a4a4;">0</div>
<div class="t" style="left:47px;top:699.1px;width:8px;text-align:center;font-size:10px;line-height:12px;height:12px;color:#a4a4a4;">3</div>
<div class="t" style="left:47px;top:709.6px;width:8px;text-align:center;font-size:10px;line-height:12px;height:12px;color:#a4a4a4;">5</div>
<div class="t" style="left:47px;top:769.9px;width:8px;text-align:center;font-size:10px;line-height:12px;height:12px;color:#a4a4a4;">4</div>
<div class="t" style="left:47px;top:780.4px;width:8px;text-align:center;font-size:10px;line-height:12px;height:12px;color:#a4a4a4;">0</div>
<div class="t" style="left:47px;top:840.8px;width:8px;text-align:center;font-size:10px;line-height:12px;height:12px;color:#a4a4a4;">4</div>
<div class="t" style="left:47px;top:851.3px;width:8px;text-align:center;font-size:10px;line-height:12px;height:12px;color:#a4a4a4;">5</div>
<div class="t" style="left:57px;top:899.5px;color:#e6e6e6;"><span style="letter-spacing:-0.5px">50%</span></div>
<div class="t" style="left:130px;top:899.5px;color:#d8d8d8;">文档<span style="letter-spacing:-0.3px">:3.07M/8.13M</span></div>
<svg style="left:265px;top:902px" width="6" height="11" viewBox="0 0 6 11"><path d="M1,1 L4.5,5.5 L1,10" stroke="#c0c0c0" stroke-width="1.1" fill="none"/></svg>
<div class="t" style="left:55px;top:925px;color:#e4e4e4;">时间轴</div>
<div class="a" style="left:1414px;top:928px;width:10px;height:8px;background:repeating-linear-gradient(to bottom,#c4c4c4 0,#c4c4c4 1px,transparent 1px,transparent 2px);"></div>
<div class="a" style="left:8px;top:96px;width:31px;height:24px;background:#383838;border-radius:2px;"></div>
<svg style="left:14.5px;top:100px" width="16" height="16" viewBox="0 0 16 16"><path d="M8,0.3 L10.6,3.4 H8.65 V7.35 H12.6 V5.4 L15.7,8 L12.6,10.6 V8.65 H8.65 V12.6 H10.6 L8,15.7 L5.4,12.6 H7.35 V8.65 H3.4 V10.6 L0.3,8 L3.4,5.4 V7.35 H7.35 V3.4 H5.4 Z" fill="#ececec"/></svg>
<svg style="left:13.5px;top:124.6px" width="18" height="18" viewBox="0 0 18 18"><path d="M1.6,5.6 V2.6 H4.4 M6.6,2.6 H9.2 M11.2,2.6 H13.6 M15.4,2.6 H17 V5.6 M17,7.4 V10.2 M17,12.2 V15.2 H14.4 M12.2,15.2 H9.6 M7.6,15.2 H5 M3.2,15.2 H1.6 V12.6 M1.6,10.6 V7.6" fill="none" stroke="#dedede" stroke-width="1.25"/></svg>
<svg style="left:32.8px;top:139.9px" width="3" height="3" viewBox="0 0 3 3"><path d="M3,0 V3 H0 Z" fill="#a4a4a4"/></svg>
<svg style="left:13.5px;top:151px" width="18" height="18" viewBox="0 0 18 18"><ellipse cx="9.6" cy="7.2" rx="7.4" ry="5.2" transform="rotate(-12 9.6 7.2)" fill="none" stroke="#dedede" stroke-width="1.3"/><circle cx="4.2" cy="11.6" r="1.7" fill="none" stroke="#dedede" stroke-width="1.1"/><path d="M5.4,12.8 C7,13.6 7,15.6 4.6,16.2" fill="none" stroke="#dedede" stroke-width="1.2"/></svg>
<svg style="left:32.8px;top:166.3px" width="3" height="3" viewBox="0 0 3 3"><path d="M3,0 V3 H0 Z" fill="#a4a4a4"/></svg>
<svg style="left:13.5px;top:177px" width="18" height="18" viewBox="0 0 18 18"><path d="M2.2,15.8 L11,6.8" stroke="#dedede" stroke-width="3.2" stroke-linecap="round"/><path d="M8.2,9.6 L10.6,7.2" stroke="#535353" stroke-width="1.1" stroke-linecap="round"/><path d="M6.8,0.8 v4 M4.8,2.8 h4 M14.4,0.6 v4.6 M12.1,2.9 h4.6 M15.4,6.6 v3.4 M13.7,8.3 h3.4" stroke="#dedede" stroke-width="1"/></svg>
<svg style="left:32.8px;top:192.3px" width="3" height="3" viewBox="0 0 3 3"><path d="M3,0 V3 H0 Z" fill="#a4a4a4"/></svg>
<div class="a" style="left:12px;top:204px;width:6px;height:6px;background:#e8e8e8;background-image:linear-gradient(45deg,#222 25%,transparent 25%,transparent 75%,#222 75%),linear-gradient(45deg,#222 25%,transparent 25%,transparent 75%,#222 75%);background-size:2px 2px;background-position:0 0,1px 1px;"></div>
<svg style="left:13.5px;top:203px" width="18" height="18" viewBox="0 0 18 18"><path d="M4.2,15.4 L3.2,14.2 L10.2,7 L12,8.8 L5,15.9 Z" fill="none" stroke="#dedede" stroke-width="1.1"/><path d="M10,5.2 L13.8,9 M10.6,7.4 L14.6,3.2" stroke="#dedede" stroke-width="2.6" stroke-linecap="round"/></svg>
<svg style="left:13.5px;top:229.4px" width="18" height="18" viewBox="0 0 18 18"><path d="M15.6,1.2 L16.8,2.4 L9.6,11 L7.6,9 Z" fill="#dedede"/><path d="M6.8,9.8 L9,12 C8.6,15 5.4,16.4 1.6,16.2 C3.6,14.8 3.4,11 6.8,9.8 Z" fill="#dedede"/></svg>
<svg style="left:32.8px;top:244.70000000000002px" width="3" height="3" viewBox="0 0 3 3"><path d="M3,0 V3 H0 Z" fill="#a4a4a4"/></svg>
<svg style="left:13.5px;top:255.60000000000002px" width="18" height="18" viewBox="0 0 18 18"><circle cx="9" cy="4.4" r="3.1" fill="#dedede"/><path d="M7.6,6 H10.4 V10 H15.6 V13 H2.4 V10 H7.6 Z" fill="#dedede"/><rect x="3.4" y="14.6" width="11.2" height="1.2" fill="#dedede"/></svg>
<svg style="left:32.8px;top:270.90000000000003px" width="3" height="3" viewBox="0 0 3 3"><path d="M3,0 V3 H0 Z" fill="#a4a4a4"/></svg>
<svg style="left:13.5px;top:282px" width="18" height="18" viewBox="0 0 18 18"><path d="M10.6,1.8 L16.2,5.8 L10.8,12.6 L5.2,8.6 Z" fill="#dedede"/><path d="M5.2,8.6 L2,12.6 L5.6,15.4 H15.4 M5.6,15.4 L10.8,12.6" fill="none" stroke="#dedede" stroke-width="1.1"/></svg>
<svg style="left:32.8px;top:297.3px" width="3" height="3" viewBox="0 0 3 3"><path d="M3,0 V3 H0 Z" fill="#a4a4a4"/></svg>
<div class="a" style="left:12px;top:309px;width:6px;height:6px;background:#e8e8e8;background-image:linear-gradient(45deg,#222 25%,transparent 25%,transparent 75%,#222 75%),linear-gradient(45deg,#222 25%,transparent 25%,transparent 75%,#222 75%);background-size:2px 2px;background-position:0 0,1px 1px;"></div>
<svg style="left:13.5px;top:308px" width="18" height="18" viewBox="0 0 18 18"><path d="M9.6,3.4 L15.4,9.2 L10,14.6 L4.4,9 Z" fill="none" stroke="#dedede" stroke-width="1.2"/><path d="M8.2,1.6 C10,2.2 10.8,4.6 10.8,7" fill="none" stroke="#dedede" stroke-width="1.1"/><path d="M16.6,9.6 C17.8,11.4 17.8,12.8 16.6,12.8 C15.4,12.8 15.4,11.4 16.6,9.6 Z" fill="#dedede"/></svg>
<div class="t" style="left:16.5px;top:331px;width:15px;text-align:center;font-family:'Liberation Serif',serif;font-size:20px;line-height:22px;height:22px;color:#e8e8e8;font-weight:bold;">T</div>
<svg style="left:32.8px;top:348.3px" width="3" height="3" viewBox="0 0 3 3"><path d="M3,0 V3 H0 Z" fill="#a4a4a4"/></svg>
<svg style="left:13.5px;top:359.5px" width="18" height="18" viewBox="0 0 18 18"><path d="M2.2,15.8 L4,8.4 L10.4,4.4 L13.6,7.6 L9.6,14 Z" fill="none" stroke="#dedede" stroke-width="1.2"/><path d="M2.4,15.6 L7.6,10.4" stroke="#dedede" stroke-width="1"/><circle cx="8" cy="10" r="1.1" fill="#dedede"/><path d="M11.2,2.6 L15.4,6.8 L14,8.2 L9.8,4 Z" fill="#dedede"/></svg>
<svg style="left:32.8px;top:374.8px" width="3" height="3" viewBox="0 0 3 3"><path d="M3,0 V3 H0 Z" fill="#a4a4a4"/></svg>
<svg style="left:13.5px;top:385.7px" width="18" height="18" viewBox="0 0 18 18"><path d="M5.2,1 V14.4 L8.4,11.4 L10.8,16.6 L13,15.6 L10.6,10.6 H15 Z" fill="#0a0a0a" stroke="#f0f0f0" stroke-width="1.1" stroke-linejoin="miter"/></svg>
<svg style="left:32.8px;top:401.0px" width="3" height="3" viewBox="0 0 3 3"><path d="M3,0 V3 H0 Z" fill="#a4a4a4"/></svg>
<svg style="left:13.5px;top:410.5px" width="18" height="18" viewBox="0 0 18 18"><rect x="1.6" y="3" width="15" height="12" fill="#6a6a6a" stroke="#dedede" stroke-width="1.2"/></svg>
<svg style="left:32.8px;top:425.8px" width="3" height="3" viewBox="0 0 3 3"><path d="M3,0 V3 H0 Z" fill="#a4a4a4"/></svg>
<svg style="left:13.5px;top:437px" width="18" height="18" viewBox="0 0 18 18"><path d="M6.2,16.4 C4.8,14.2 2.8,12 1.6,10.2 C1.2,9.2 2.4,8.6 3.2,9.4 L5.2,11.4 V4 C5.2,2.8 6.8,2.8 6.8,4 V8.6 H7.4 V2.4 C7.4,1.2 9,1.2 9,2.4 V8.6 H9.6 V3 C9.6,1.8 11.2,1.8 11.2,3 V8.8 H11.8 V5 C11.8,3.8 13.4,3.8 13.4,5 V11.6 C13.4,13.6 12.8,15 12,16.4 Z" fill="#dedede"/></svg>
<svg style="left:32.8px;top:452.3px" width="3" height="3" viewBox="0 0 3 3"><path d="M3,0 V3 H0 Z" fill="#a4a4a4"/></svg>
<svg style="left:13.5px;top:463px" width="18" height="18" viewBox="0 0 18 18"><circle cx="7.4" cy="7.4" r="5.6" fill="none" stroke="#dedede" stroke-width="1.3"/><path d="M11.6,11.6 L16.4,16.4" stroke="#dedede" stroke-width="2" stroke-linecap="round"/><path d="M6,4.6 C8,4 9.8,5.2 10.2,7" fill="none" stroke="#a0a0a0" stroke-width="0.9"/></svg>
<svg style="left:13.5px;top:489px" width="18" height="18" viewBox="0 0 18 18"><circle cx="3.4" cy="9" r="2" fill="#dedede"/><circle cx="9" cy="9" r="2" fill="#dedede"/><circle cx="14.6" cy="9" r="2" fill="#dedede"/></svg>
<svg style="left:32.8px;top:505.3px" width="3" height="3" viewBox="0 0 3 3"><path d="M3,0 V3 H0 Z" fill="#a4a4a4"/></svg>
<div class="a" style="left:11px;top:520px;width:7px;height:7px;background:#e4e4e4;"></div>
<div class="a" style="left:8px;top:517px;width:7px;height:7px;box-sizing:border-box;background:#000;border:1px solid #e0e0e0;"></div>
<svg style="left:26px;top:516px" width="11" height="11" viewBox="0 0 11 11"><path d="M2.8,0.6 L0.4,3 L2.8,5.4 M0.6,3 H7.8 V10 M5.4,7.6 L7.8,10.2 L10.2,7.6" fill="none" stroke="#dedede" stroke-width="1.3"/></svg>
<div class="a" style="left:18px;top:542px;width:20px;height:20px;box-sizing:border-box;background:#fff;border:1px solid #1c1c1c;"></div>
<div class="a" style="left:8px;top:532px;width:20px;height:20px;box-sizing:border-box;background:#f3f3f5;border:1px solid #1c1c1c;box-shadow:inset 0 0 0 1px #fff;"></div>
<svg style="left:14px;top:573px" width="18" height="14" viewBox="0 0 18 14"><rect x="0.6" y="0.6" width="16.4" height="12.4" fill="none" stroke="#dedede" stroke-width="1.2"/><circle cx="8.8" cy="6.8" r="3.6" fill="none" stroke="#dedede" stroke-width="1" stroke-dasharray="1,1.2"/></svg>
<svg style="left:14px;top:599px" width="18" height="14" viewBox="0 0 18 14"><rect x="0.6" y="3.6" width="11" height="8.6" fill="none" stroke="#dedede" stroke-width="1.2"/><rect x="5.4" y="0.6" width="11.4" height="8.2" fill="#535353" stroke="#dedede" stroke-width="1.2"/></svg>
<svg style="left:32.8px;top:612.3px" width="3" height="3" viewBox="0 0 3 3"><path d="M3,0 V3 H0 Z" fill="#a4a4a4"/></svg>
<div class="a" style="left:1220px;top:77px;width:211px;height:165px;background:#3a3a3a;box-shadow:0 0 3px 1px rgba(0,0,0,0.45);"></div>
<div class="a" style="left:1221px;top:80px;width:210px;height:161px;background:#535353;"></div>
<div class="a" style="left:1221px;top:80px;width:210px;height:28px;background:#424242;"></div>
<div class="a" style="left:1221px;top:80px;width:67px;height:29px;background:#535353;"></div>
<div class="t" style="left:1231px;top:86px;color:#f0f0f0;">历史记录</div>
<svg style="left:1390px;top:89px" width="10" height="9" viewBox="0 0 10 9"><path d="M1,1 L4.2,4.5 L1,8 M5.6,1 L8.8,4.5 L5.6,8" fill="none" stroke="#d0d0d0" stroke-width="1.2"/></svg>
<div class="a" style="left:1408px;top:87px;width:1px;height:12px;background:#9a9a9a;"></div>
<div class="a" style="left:1415px;top:89px;width:10px;height:8px;background:repeating-linear-gradient(to bottom,#c8c8c8 0,#c8c8c8 1px,transparent 1px,transparent 2px);"></div>
<div class="a" style="left:1221px;top:116px;width:194px;height:1px;background:#454545;"></div>
<div class="a" style="left:1221px;top:139px;width:194px;height:1px;background:#454545;"></div>
<div class="a" style="left:1226px;top:122px;width:13px;height:13px;box-sizing:border-box;border:1px solid #5e5e5e;border-top-color:#4c4c4c;border-left-color:#4c4c4c;"></div>
<svg style="left:1252px;top:121px" width="16" height="16" viewBox="0 0 16 16"><path d="M8,0.3 L10.6,3.4 H8.65 V7.35 H12.6 V5.4 L15.7,8 L12.6,10.6 V8.65 H8.65 V12.6 H10.6 L8,15.7 L5.4,12.6 H7.35 V8.65 H3.4 V10.6 L0.3,8 L3.4,5.4 V7.35 H7.35 V3.4 H5.4 Z" fill="#e0e0e0"/></svg>
<div class="t" style="left:1280px;top:121px;color:#f0f0f0;">移动</div>
<div class="a" style="left:1221px;top:162px;width:194px;height:1px;background:#454545;"></div>
<div class="a" style="left:1226px;top:145px;width:13px;height:13px;box-sizing:border-box;border:1px solid #5e5e5e;border-top-color:#4c4c4c;border-left-color:#4c4c4c;"></div>
<svg style="left:1253px;top:144px" width="15" height="15" viewBox="0 0 15 15"><path d="M0.7,2.8 V14.3 H13.3 V2.8 H8.5 V0.8 H0.7 Z" fill="none" stroke="#e6e6e6" stroke-width="1.2"/><path d="M2.8,5.6 H11.2 M2.8,7.9 H11.2 M2.8,10.2 H11.2 M2.8,12.4 H11.2" stroke="#e6e6e6" stroke-width="1"/><rect x="0.7" y="0.8" width="7.8" height="2" fill="#e6e6e6"/></svg>
<div class="t" style="left:1280px;top:144px;color:#f0f0f0;">新建图层</div>
<div class="a" style="left:1221px;top:185px;width:194px;height:1px;background:#454545;"></div>
<div class="a" style="left:1226px;top:168px;width:13px;height:13px;box-sizing:border-box;border:1px solid #5e5e5e;border-top-color:#4c4c4c;border-left-color:#4c4c4c;"></div>
<svg style="left:1253px;top:167px" width="15" height="15" viewBox="0 0 15 15"><path d="M0.7,2.8 V14.3 H13.3 V2.8 H8.5 V0.8 H0.7 Z" fill="none" stroke="#e6e6e6" stroke-width="1.2"/><path d="M2.8,5.6 H11.2 M2.8,7.9 H11.2 M2.8,10.2 H11.2 M2.8,12.4 H11.2" stroke="#e6e6e6" stroke-width="1"/><rect x="0.7" y="0.8" width="7.8" height="2" fill="#e6e6e6"/></svg>
<div class="t" style="left:1280px;top:167px;color:#f0f0f0;">填充图层</div>
<div class="a" style="left:1221px;top:186px;width:194px;height:22px;background:#6b6b6b;"></div>
<div class="a" style="left:1221px;top:208px;width:194px;height:1px;background:#3e3e3e;"></div>
<div class="a" style="left:1226px;top:191px;width:13px;height:13px;box-sizing:border-box;border-top:1px solid #444;border-left:1px solid #444;"></div>
<svg style="left:1253px;top:190px" width="15" height="15" viewBox="0 0 15 15"><path d="M0.7,2.8 V14.3 H13.3 V2.8 H8.5 V0.8 H0.7 Z" fill="none" stroke="#e6e6e6" stroke-width="1.2"/><path d="M2.8,5.6 H11.2 M2.8,7.9 H11.2 M2.8,10.2 H11.2 M2.8,12.4 H11.2" stroke="#e6e6e6" stroke-width="1"/><rect x="0.7" y="0.8" width="7.8" height="2" fill="#e6e6e6"/></svg>
<div class="t" style="left:1280px;top:190px;color:#f0f0f0;">名称更改</div>
<div class="a" style="left:1415px;top:115px;width:16px;height:93px;background:#4a4a4a;"></div>
<svg style="left:1417px;top:119px" width="12" height="8" viewBox="0 0 12 8"><path d="M2,6 L6,2.4 L10,6" fill="none" stroke="#6e6e6e" stroke-width="1.2"/></svg>
<div class="a" style="left:1417px;top:170px;width:12px;height:22px;background:#6a6a6a;"></div>
<svg style="left:1417px;top:195px" width="12" height="8" viewBox="0 0 12 8"><path d="M2,2 L6,5.6 L10,2" fill="none" stroke="#6e6e6e" stroke-width="1.2"/></svg>
<div class="a" style="left:1221px;top:209px;width:210px;height:24px;background:#4c4c4c;"></div>
<svg style="left:1327px;top:213px" width="16" height="16" viewBox="0 0 16 16"><path d="M6,1.5 H11.5 L14.5,4.5 V13.5 H6 Z" fill="#d8d8d8"/><path d="M11.5,1.5 V4.5 H14.5" fill="none" stroke="#4c4c4c" stroke-width="1"/><path d="M1,9.5 H8 M4.5,6 V13" stroke="#e6e6e6" stroke-width="2.2"/><path d="M1,9.5 H8 M4.5,6 V13" stroke="#4c4c4c" stroke-width="4.2" opacity="0"/></svg>
<svg style="left:1361px;top:214px" width="16" height="14" viewBox="0 0 16 14"><path d="M1,3.5 H4.5 L5.8,1.5 H10.2 L11.5,3.5 H15 V12.5 H1 Z" fill="#d8d8d8"/><circle cx="8" cy="7.8" r="2.9" fill="#4c4c4c"/><circle cx="8" cy="7.8" r="1.5" fill="#d8d8d8"/></svg>
<svg style="left:1390px;top:213px" width="13" height="15" viewBox="0 0 13 15"><path d="M1,3.2 H12 M4.6,3 V1.2 H8.4 V3" fill="none" stroke="#d8d8d8" stroke-width="1.2"/><path d="M2.2,4.4 V13.8 H10.8 V4.4" fill="none" stroke="#d8d8d8" stroke-width="1.2"/><path d="M4.7,5.5 V12.4 M6.5,5.5 V12.4 M8.3,5.5 V12.4" stroke="#d8d8d8" stroke-width="1"/></svg>
<div class="a" style="left:1221px;top:233px;width:210px;height:1px;background:#3a3a3a;"></div>
<div class="a" style="left:1221px;top:234px;width:210px;height:7px;background:#535353;"></div>
<div class="a" style="left:1316px;top:234px;width:19px;height:5px;background:repeating-linear-gradient(to right,#3e3e3e 0,#3e3e3e 1px,transparent 1px,transparent 2px);"></div>
<svg style="left:1457px;top:70px" width="8" height="5" viewBox="0 0 8 5"><path d="M3,0.2 L0.4,2.5 L3,4.8 Z M7,0.2 L4.4,2.5 L7,4.8 Z" fill="#c8c8c8"/></svg>
<svg style="left:1710px;top:70px" width="8" height="5" viewBox="0 0 8 5"><path d="M0.4,0.2 L3,2.5 L0.4,4.8 Z M4.4,0.2 L7,2.5 L4.4,4.8 Z" fill="#c8c8c8"/></svg>
<div class="a" style="left:1433px;top:79px;width:37px;height:1px;background:#3e3e3e;"></div>
<div class="a" style="left:1442px;top:82px;width:19px;height:5px;background:repeating-linear-gradient(to right,#424242 0,#424242 1px,transparent 1px,transparent 2px);"></div>
<div class="a" style="left:1438px;top:91px;width:27px;height:22px;background:#383838;border-radius:2px;"></div>
<svg style="left:1444px;top:93px" width="18" height="18" viewBox="0 0 18 18"><rect x="2.2" y="1.6" width="4" height="3.6" fill="none" stroke="#dcdcdc" stroke-width="1"/><rect x="2.2" y="7" width="4" height="3.6" fill="none" stroke="#dcdcdc" stroke-width="1"/><rect x="1.7" y="12.3" width="5" height="4.4" fill="#dcdcdc"/><path d="M9,4.6 L12.6,1.2 L13,3.4 C16.6,5 16,11 11.4,14.2 C13.4,11 13.6,7 12.2,6 L12.6,7.6 Z" fill="#dcdcdc"/></svg>
<div class="a" style="left:1433px;top:118px;width:37px;height:1px;background:#3b3b3b;"></div>
<div class="a" style="left:1433px;top:119px;width:37px;height:1px;background:#4c4c4c;"></div>
<div class="a" style="left:1442px;top:122px;width:19px;height:5px;background:repeating-linear-gradient(to right,#424242 0,#424242 1px,transparent 1px,transparent 2px);"></div>
<svg style="left:1441px;top:134px" width="22" height="19" viewBox="0 0 22 19"><path d="M1,2.2 h1.6 M1,5 h1.6 M1,7.8 h1.6 M3.6,2.2 h3.4 M3.6,5 h3.4 M3.6,7.8 h3.4" stroke="#dcdcdc" stroke-width="1.3"/><path d="M19.4,2.6 L20.8,4 L13.4,11.6 L11,9.4 Z" fill="#dcdcdc"/><path d="M10,10.2 L12.6,12.8 C12,15.6 8.6,17.2 4.4,16.8 C6.6,15.4 6.6,11.4 10,10.2 Z" fill="#dcdcdc"/></svg>
<svg style="left:1441px;top:162px" width="22" height="20" viewBox="0 0 22 20"><path d="M0.6,4 C3,1 8,1 10.4,3 H19.6 V5.2 H10.4 C8,7.2 3,7 0.6,4 Z" fill="#dcdcdc"/><path d="M20.2,13.6 C19,9.6 15.2,9.4 13,12.4 H3.6 V14.8 H13 C15,18 19,17.6 20.2,13.6 Z" fill="#dcdcdc"/></svg>
<div class="a" style="left:1433px;top:188px;width:37px;height:1px;background:#3b3b3b;"></div>
<div class="a" style="left:1433px;top:189px;width:37px;height:1px;background:#4c4c4c;"></div>
<div class="a" style="left:1442px;top:192px;width:19px;height:5px;background:repeating-linear-gradient(to right,#424242 0,#424242 1px,transparent 1px,transparent 2px);"></div>
<svg style="left:1441px;top:203px" width="20" height="20" viewBox="0 0 20 20"><path d="M1,2.2 h1.6 M1,5 h1.6 M1,7.8 h1.6 M3.6,2.2 h3 M3.6,5 h3 M3.6,7.8 h3" stroke="#dcdcdc" stroke-width="1.2"/><circle cx="12.4" cy="5.6" r="3.1" fill="#dcdcdc"/><path d="M11,7.4 H13.8 V11 H18.4 V14.2 H6.4 V11 H11 Z" fill="#dcdcdc"/><rect x="7.2" y="15.8" width="10.4" height="1.2" fill="#dcdcdc"/></svg>
<div class="a" style="left:1433px;top:229px;width:37px;height:1px;background:#3b3b3b;"></div>
<div class="a" style="left:1433px;top:230px;width:37px;height:1px;background:#4c4c4c;"></div>
<div class="a" style="left:1442px;top:233px;width:19px;height:5px;background:repeating-linear-gradient(to right,#424242 0,#424242 1px,transparent 1px,transparent 2px);"></div>
<div class="t" style="left:1446px;top:243px;font-size:16px;line-height:22px;height:22px;color:#e0e0e0;">A</div>
<div class="a" style="left:1459px;top:246px;width:1px;height:16px;background:#e0e0e0;"></div>
<div class="t" style="left:1446.5px;top:270px;font-size:18px;line-height:22px;height:22px;color:#e0e0e0;font-weight:bold;">¶</div>
<div class="a" style="left:1433px;top:298px;width:37px;height:1px;background:#3b3b3b;"></div>
<div class="a" style="left:1433px;top:299px;width:37px;height:1px;background:#4c4c4c;"></div>
<div class="a" style="left:1442px;top:302px;width:19px;height:5px;background:repeating-linear-gradient(to right,#424242 0,#424242 1px,transparent 1px,transparent 2px);"></div>
<svg style="left:1443px;top:314px" width="20" height="20" viewBox="0 0 20 20"><path d="M2.2,16.6 L8.6,10.2" stroke="#dcdcdc" stroke-width="3.2" stroke-linecap="round"/><path d="M8.6,10.2 L17,1.8" stroke="#dcdcdc" stroke-width="1.4"/><path d="M1,5 C0.2,2.6 2.2,0.6 4.8,1.4 L3,3.2 L4,4.8 L5.8,4.4 L7,2.8 C7.8,5 6.4,6.8 4.4,6.6 Z" fill="#dcdcdc"/><path d="M5,5.4 L13.6,12.8" stroke="#dcdcdc" stroke-width="1.9"/><circle cx="15.4" cy="14.6" r="2.3" fill="none" stroke="#dcdcdc" stroke-width="1.5"/></svg>
<div class="a" style="left:1433px;top:339px;width:37px;height:1px;background:#3b3b3b;"></div>
<div class="a" style="left:1433px;top:340px;width:37px;height:1px;background:#4c4c4c;"></div>
<div class="t" style="left:1482px;top:85px;color:#f0f0f0;">属性</div>
<div class="a" style="left:1707px;top:89px;width:10px;height:8px;background:repeating-linear-gradient(to bottom,#c8c8c8 0,#c8c8c8 1px,transparent 1px,transparent 2px);"></div>
<div class="a" style="left:1484px;top:113px;width:22px;height:22px;background:#383838;border-radius:2px;"></div>
<svg style="left:1487px;top:117px" width="16" height="14" viewBox="0 0 16 14"><rect x="0.7" y="0.7" width="14.6" height="12.6" fill="none" stroke="#e0e0e0" stroke-width="1.2"/><path d="M1.5,12.5 V9.5 L4,7 L5.5,8.5 L8,5 L10.5,8 L12,7 L14.5,10 V12.5 Z" fill="#e0e0e0"/><rect x="11" y="3" width="2" height="2" fill="#e0e0e0"/></svg>
<div class="t" style="left:1513px;top:117px;color:#e8e8e8;">像素图层属性</div>
<div class="a" style="left:1473px;top:140px;width:250px;height:1px;background:#404040;"></div>
<div class="a" style="left:1708px;top:141px;width:15px;height:344px;background:#4b4b4b;"></div>
<div class="t" style="left:1484px;top:153px;color:#c8c8c8;">W:</div>
<div class="inp" style="left:1504px;top:151px;width:63px;height:19px;"></div>
<div class="t" style="left:1507px;top:153px;color:#f0f0f0;"><span style="letter-spacing:-0.6px">12.22 </span>英寸</div>
<div class="a" style="left:1574px;top:148px;width:25px;height:26px;background:#383838;border-radius:2px;"></div>
<svg style="left:1579px;top:156px" width="15" height="9" viewBox="0 0 15 9"><rect x="0.8" y="1" width="7.4" height="6.4" rx="3.2" fill="none" stroke="#d0d0d0" stroke-width="1.3"/><rect x="6.6" y="1" width="7.4" height="6.4" rx="3.2" fill="none" stroke="#d0d0d0" stroke-width="1.3"/><path d="M4.4,4.2 H10.4" stroke="#d0d0d0" stroke-width="1.3"/></svg>
<div class="t" style="left:1610px;top:153px;color:#c8c8c8;">H:</div>
<div class="inp" style="left:1627px;top:151px;width:62px;height:19px;"></div>
<div class="t" style="left:1630px;top:153px;color:#f0f0f0;"><span style="letter-spacing:-0.6px">16.94 </span>英寸</div>
<div class="t" style="left:1488px;top:180px;color:#c8c8c8;">X:</div>
<div class="inp" style="left:1504px;top:178px;width:63px;height:19px;"></div>
<div class="t" style="left:1507px;top:180px;color:#f0f0f0;"><span style="margin-left:-2px"><span style="letter-spacing:-0.6px">0 </span>厘米</span></div>
<div class="t" style="left:1610px;top:180px;color:#c8c8c8;">Y:</div>
<div class="inp" style="left:1627px;top:178px;width:62px;height:19px;"></div>
<div class="t" style="left:1630px;top:180px;color:#f0f0f0;"><span style="margin-left:-2px"><span style="letter-spacing:-0.6px">0 </span>厘米</span></div>
<div class="a" style="left:1507px;top:514px;width:44px;height:29px;background:#535353;"></div>
<div class="a" style="left:1506px;top:514px;width:1px;height:28px;background:#383838;"></div>
<div class="a" style="left:1551px;top:514px;width:1px;height:28px;background:#383838;"></div>
<div class="a" style="left:1595px;top:514px;width:1px;height:28px;background:#3a3a3a;"></div>
<div class="t" style="left:1481px;top:520px;color:#8e8e8e;">3D</div>
<div class="t" style="left:1517px;top:520px;color:#f0f0f0;">图层</div>
<div class="t" style="left:1561px;top:520px;color:#a8a8a8;">通道</div>
<div class="a" style="left:1707px;top:524px;width:10px;height:8px;background:repeating-linear-gradient(to bottom,#c8c8c8 0,#c8c8c8 1px,transparent 1px,transparent 2px);"></div>
<div class="a" style="left:1477px;top:550px;width:87px;height:20px;box-sizing:border-box;background:#454545;border:1px solid #636363;border-radius:3px;"></div>
<svg style="left:1483px;top:553px" width="13" height="13" viewBox="0 0 13 13"><circle cx="7.6" cy="5" r="3.6" fill="none" stroke="#e0e0e0" stroke-width="1.4"/><path d="M5,7.8 L1.4,11.6" stroke="#e0e0e0" stroke-width="1.8"/></svg>
<div class="t" style="left:1500px;top:553px;color:#f0f0f0;">类型</div>
<svg style="left:1552px;top:557px" width="9" height="6" viewBox="0 0 9 6"><path d="M1,1 L4.5,5 L8,1" stroke="#c8c8c8" stroke-width="1.0" fill="none"/></svg>
<svg style="left:1579px;top:554px" width="13" height="11" viewBox="0 0 13 11"><rect x="0.6" y="0.6" width="11.8" height="9.2" fill="none" stroke="#dcdcdc" stroke-width="1.1"/><path d="M1.8,8.6 L4.4,5.4 L6.2,7.2 L8.2,4.8 L11.2,8.6 Z" fill="#dcdcdc"/></svg>
<svg style="left:1604px;top:554px" width="11" height="11" viewBox="0 0 13 13"><circle cx="6.5" cy="6.5" r="5.4" fill="none" stroke="#dcdcdc" stroke-width="1.2"/><path d="M2.7,10.3 A5.4,5.4 0 0 1 10.3,2.7 Z" fill="#dcdcdc"/></svg>
<div class="t" style="left:1627px;top:549.5px;width:14px;text-align:center;font-family:'Liberation Serif',serif;font-size:14.5px;line-height:20px;height:20px;color:#dcdcdc;font-weight:bold;">T</div>
<svg style="left:1652px;top:554px" width="11.5" height="11.5" viewBox="0 0 13 13"><rect x="2" y="2" width="9" height="9" fill="none" stroke="#dcdcdc" stroke-width="1.1"/><rect x="0.3" y="0.3" width="3" height="3" fill="#dcdcdc"/><rect x="9.7" y="0.3" width="3" height="3" fill="#dcdcdc"/><rect x="0.3" y="9.7" width="3" height="3" fill="#dcdcdc"/><rect x="9.7" y="9.7" width="3" height="3" fill="#dcdcdc"/></svg>
<svg style="left:1677px;top:553.5px" width="11" height="12" viewBox="0 0 13 14"><path d="M4.4,0.8 H9.6 L12.2,3.4 V10.6 H4.4 Z" fill="none" stroke="#dcdcdc" stroke-width="1.1"/><path d="M9.2,0.8 V3.8 H12.2" fill="none" stroke="#dcdcdc" stroke-width="1"/><rect x="0.6" y="7.4" width="6" height="6" fill="#dcdcdc"/></svg>
<div class="a" style="left:1704px;top:551px;width:10px;height:18px;background:#3a3a3a;border-radius:5px;"></div>
<div class="a" style="left:1705px;top:551px;width:8px;height:8px;background:#dadada;border-radius:4px;"></div>
<div class="a" style="left:1473px;top:573px;width:250px;height:1px;background:#444444;"></div>
<div class="a" style="left:1477px;top:577px;width:118px;height:20px;box-sizing:border-box;background:#454545;border:1px solid #636363;border-radius:3px;"></div>
<div class="t" style="left:1486px;top:580.3px;color:#f0f0f0;">正常</div>
<svg style="left:1583px;top:584px" width="9" height="6" viewBox="0 0 9 6"><path d="M1,1 L4.5,5 L8,1" stroke="#c8c8c8" stroke-width="1.0" fill="none"/></svg>
<div class="t" style="left:1603px;top:580px;color:#e0e0e0;">不透明度:</div>
<div class="a" style="left:1659px;top:577px;width:55px;height:20px;box-sizing:border-box;background:#454545;border:1px solid #5e5e5e;"></div>
<div class="a" style="left:1697px;top:578px;width:1px;height:18px;background:#5e5e5e;"></div>
<div class="t" style="left:1662px;top:580px;color:#f0f0f0;"><span style="letter-spacing:-0.8px">100%</span></div>
<svg style="left:1701px;top:584px" width="9" height="6" viewBox="0 0 9 6"><path d="M1,1 L4.5,5 L8,1" stroke="#c8c8c8" stroke-width="1.0" fill="none"/></svg>
<div class="a" style="left:1473px;top:600px;width:250px;height:1px;background:#444444;"></div>
<div class="t" style="left:1480px;top:606px;color:#e0e0e0;">锁定:</div>
<div class="a" style="left:1517px;top:608px;width:12px;height:12px;box-sizing:border-box;border:1px solid #dcdcdc;background-color:#555;background-image:linear-gradient(45deg,#dcdcdc 25%,transparent 25%,transparent 75%,#dcdcdc 75%),linear-gradient(45deg,#dcdcdc 25%,transparent 25%,transparent 75%,#dcdcdc 75%);background-size:6px 6px;background-position:-1px -1px,2px 2px;"></div>
<svg style="left:1538px;top:607px" width="14" height="14" viewBox="0 0 14 14"><path d="M12.4,0.8 L13.4,1.8 L7.8,8.8 L6.2,7.2 Z" fill="#dcdcdc"/><path d="M5.6,7.8 L7.4,9.6 C7,12 4.4,13.2 1.2,13 C2.8,11.8 2.8,8.8 5.6,7.8 Z" fill="#dcdcdc"/></svg>
<svg style="left:1560px;top:607px" width="14" height="14" viewBox="0 0 14 14"><path d="M7,0.5 L9.4,3.2 H7.7 V6.3 H10.8 V4.6 L13.5,7 L10.8,9.4 V7.7 H7.7 V10.8 H9.4 L7,13.5 L4.6,10.8 H6.3 V7.7 H3.2 V9.4 L0.5,7 L3.2,4.6 V6.3 H6.3 V3.2 H4.6 Z" fill="#dcdcdc"/></svg>
<svg style="left:1582px;top:607px" width="14" height="14" viewBox="0 0 14 14"><path d="M3,0.5 V11 H13.5 M0.5,3 H9 L11,5 V13.5" fill="none" stroke="#dcdcdc" stroke-width="1.2" /><path d="M11.4,0.8 l1.8,1.8" stroke="#dcdcdc" stroke-width="1"/></svg>
<svg style="left:1605px;top:607px" width="12" height="14" viewBox="0 0 12 14"><path d="M3.2,6 V4 C3.2,0.6 8.8,0.6 8.8,4 V6" fill="none" stroke="#dcdcdc" stroke-width="1.5"/><rect x="0.8" y="6" width="10.4" height="7.4" rx="0.8" fill="#dcdcdc"/></svg>
<div class="t" style="left:1627px;top:607px;color:#e0e0e0;">填充:</div>
<div class="a" style="left:1659px;top:604px;width:55px;height:20px;box-sizing:border-box;background:#454545;border:1px solid #5e5e5e;"></div>
<div class="a" style="left:1697px;top:605px;width:1px;height:18px;background:#5e5e5e;"></div>
<div class="t" style="left:1662px;top:607px;color:#f0f0f0;"><span style="letter-spacing:-0.8px">100%</span></div>
<svg style="left:1701px;top:611px" width="9" height="6" viewBox="0 0 9 6"><path d="M1,1 L4.5,5 L8,1" stroke="#c8c8c8" stroke-width="1.0" fill="none"/></svg>
<div class="a" style="left:1473px;top:627px;width:250px;height:1px;background:#444444;"></div>
<div class="a" style="left:1708px;top:628px;width:15px;height:294px;background:#4b4b4b;"></div>
<div class="a" style="left:1473px;top:667px;width:235px;height:1px;background:#444444;"></div>
<div class="a" style="left:1504px;top:629px;width:1px;height:38px;background:#444444;"></div>
<svg style="left:1481px;top:643px" width="15" height="11" viewBox="0 0 15 11"><path d="M0.5,5.5 C3,1 12,1 14.5,5.5 C12,10 3,10 0.5,5.5 Z" fill="#dcdcdc"/><circle cx="7.5" cy="5.5" r="2.7" fill="#4a4a4a"/><circle cx="8.5" cy="4.5" r="0.9" fill="#9a9a9a"/></svg>
<div class="a" style="left:1507px;top:632px;width:24px;height:32px;box-sizing:border-box;border:1px solid #2a2a2a;background-color:#fff;background-image:linear-gradient(45deg,#ccc 25%,transparent 25%,transparent 75%,#ccc 75%),linear-gradient(45deg,#ccc 25%,transparent 25%,transparent 75%,#ccc 75%);background-size:8px 8px;background-position:0 0,4px 4px;"></div>
<svg style="left:1507px;top:632px" width="24" height="32" viewBox="0 0 24 32"><path d="M7,24 L19,7" stroke="#111" stroke-width="2.6" stroke-dasharray="1.6,1.4"/></svg>
<div class="a" style="left:1518px;top:651px;width:13px;height:13px;background:#535353;"></div>
<svg style="left:1519px;top:652px" width="11" height="12" viewBox="0 0 11 12"><path d="M3.4,0.6 H7.6 L10.4,3.2 V7.6 H3.4 Z" fill="#dcdcdc"/><rect x="0.4" y="6.2" width="5.4" height="5.4" fill="#dcdcdc" stroke="#535353" stroke-width="0.8"/><path d="M7.4,0.8 V3.4 H10.2" fill="none" stroke="#535353" stroke-width="0.8"/></svg>
<div class="t" style="left:1541px;top:641.5px;color:#f0f0f0;">矢量智能对象</div>
<div class="a" style="left:1473px;top:706px;width:235px;height:1px;background:#444444;"></div>
<div class="a" style="left:1504px;top:668px;width:1px;height:38px;background:#444444;"></div>
<svg style="left:1481px;top:682px" width="15" height="11" viewBox="0 0 15 11"><path d="M0.5,5.5 C3,1 12,1 14.5,5.5 C12,10 3,10 0.5,5.5 Z" fill="#dcdcdc"/><circle cx="7.5" cy="5.5" r="2.7" fill="#4a4a4a"/><circle cx="8.5" cy="4.5" r="0.9" fill="#9a9a9a"/></svg>
<div class="a" style="left:1507px;top:671px;width:24px;height:32px;box-sizing:border-box;border:1px solid #2a2a2a;background-color:#fff;background-image:linear-gradient(45deg,#ccc 25%,transparent 25%,transparent 75%,#ccc 75%),linear-gradient(45deg,#ccc 25%,transparent 25%,transparent 75%,#ccc 75%);background-size:8px 8px;background-position:0 0,4px 4px;"></div>
<svg style="left:1507px;top:671px" width="24" height="32" viewBox="0 0 24 32"><path d="M4,6 H16 L18,7.6" stroke="#222" stroke-width="1.6" fill="none"/><path d="M4,8.4 H16" stroke="#999" stroke-width="0.8"/></svg>
<div class="a" style="left:1518px;top:690px;width:13px;height:13px;background:#535353;"></div>
<svg style="left:1519px;top:691px" width="11" height="12" viewBox="0 0 11 12"><path d="M3.4,0.6 H7.6 L10.4,3.2 V7.6 H3.4 Z" fill="#dcdcdc"/><rect x="0.4" y="6.2" width="5.4" height="5.4" fill="#dcdcdc" stroke="#535353" stroke-width="0.8"/><path d="M7.4,0.8 V3.4 H10.2" fill="none" stroke="#535353" stroke-width="0.8"/></svg>
<div class="t" style="left:1541px;top:680.5px;color:#f0f0f0;">矢量智能对象</div>
<div class="a" style="left:1473px;top:707px;width:235px;height:38px;background:#6b6b6b;"></div>
<div class="a" style="left:1473px;top:707px;width:31px;height:38px;background:#535353;"></div>
<div class="a" style="left:1473px;top:745px;width:235px;height:1px;background:#444444;"></div>
<div class="a" style="left:1504px;top:707px;width:1px;height:38px;background:#444444;"></div>
<svg style="left:1481px;top:721px" width="15" height="11" viewBox="0 0 15 11"><path d="M0.5,5.5 C3,1 12,1 14.5,5.5 C12,10 3,10 0.5,5.5 Z" fill="#dcdcdc"/><circle cx="7.5" cy="5.5" r="2.7" fill="#4a4a4a"/><circle cx="8.5" cy="4.5" r="0.9" fill="#9a9a9a"/></svg>
<div class="a" style="left:1507px;top:710px;width:24px;height:32px;box-sizing:border-box;border:1px solid #2a2a2a;background:#f3f3f5;"></div>
<svg style="left:1504px;top:707px" width="30" height="38" viewBox="0 0 30 38"><path d="M0.5,8 V0.5 H8 M22,0.5 H29.5 V8 M0.5,30 V37.5 H8 M22,37.5 H29.5 V30" fill="none" stroke="#f0f0f0" stroke-width="1"/></svg>
<div class="t" style="left:1541px;top:719.5px;color:#f0f0f0;">背景</div>
<div class="a" style="left:1473px;top:785px;width:235px;height:1px;background:#444444;"></div>
<div class="a" style="left:1504px;top:746px;width:1px;height:39px;background:#444444;"></div>
<svg style="left:1481px;top:760px" width="15" height="11" viewBox="0 0 15 11"><path d="M0.5,5.5 C3,1 12,1 14.5,5.5 C12,10 3,10 0.5,5.5 Z" fill="#dcdcdc"/><circle cx="7.5" cy="5.5" r="2.7" fill="#4a4a4a"/><circle cx="8.5" cy="4.5" r="0.9" fill="#9a9a9a"/></svg>
<div class="a" style="left:1507px;top:749px;width:24px;height:32px;box-sizing:border-box;border:1px solid #2a2a2a;background:#fff;"></div>
<svg style="left:1680px;top:759px" width="12" height="14" viewBox="0 0 12 14"><path d="M3.4,6 V4 C3.4,1 8.6,1 8.6,4 V6" fill="none" stroke="#d8d8d8" stroke-width="1.1"/><rect x="1" y="6" width="10" height="7" fill="none" stroke="#d8d8d8" stroke-width="1.1"/><rect x="5.2" y="8.6" width="1.6" height="2" fill="#d8d8d8"/></svg>
<div class="t" style="left:1541px;top:758.5px;color:#f0f0f0;">背景</div>
<div class="a" style="left:1473px;top:922px;width:250px;height:1px;background:#404040;"></div>
<svg style="left:1520px;top:930px" width="15" height="9" viewBox="0 0 15 9"><rect x="0.8" y="1" width="7.4" height="6.4" rx="3.2" fill="none" stroke="#8a8a8a" stroke-width="1.3"/><rect x="6.6" y="1" width="7.4" height="6.4" rx="3.2" fill="none" stroke="#8a8a8a" stroke-width="1.3"/><path d="M4.4,4.2 H10.4" stroke="#8a8a8a" stroke-width="1.3"/></svg>
<div class="t" style="left:1547px;top:925px;font-style:italic;font-size:14px;line-height:18px;height:18px;color:#dcdcdc;letter-spacing:-0.3px;">fx</div>
<svg style="left:1562px;top:942px" width="4" height="3" viewBox="0 0 4 3"><path d="M0,0 H4 L2,2.6 Z" fill="#e0e0e0"/></svg>
<div class="a" style="left:1574px;top:929px;width:13px;height:10px;background:#dcdcdc;"></div>
<div class="a" style="left:1577.5px;top:931px;width:6px;height:6px;border-radius:3px;background:#535353;"></div>
<svg style="left:1602px;top:928px" width="12" height="12" viewBox="0 0 12 12"><circle cx="6" cy="6" r="5" fill="none" stroke="#dcdcdc" stroke-width="1.2"/><path d="M2.5,9.5 A5,5 0 0 0 9.5,2.5 Z" fill="#dcdcdc"/></svg>
<svg style="left:1616px;top:942px" width="4" height="3" viewBox="0 0 4 3"><path d="M0,0 H4 L2,2.6 Z" fill="#e0e0e0"/></svg>
<svg style="left:1628px;top:928px" width="14" height="12" viewBox="0 0 14 12"><path d="M0.5,1 H5.5 V2.2 H0.5 Z" fill="#dcdcdc"/><rect x="0.5" y="3" width="12.5" height="8" fill="#dcdcdc"/></svg>
<svg style="left:1656px;top:929px" width="12" height="12" viewBox="0 0 12 12"><path d="M1,0.8 H10.4 V10.6 H4.4 L1,7.4 Z" fill="none" stroke="#dcdcdc" stroke-width="1.2"/><path d="M1,7.2 H4.6 V10.6" fill="#dcdcdc" stroke="#dcdcdc" stroke-width="1"/></svg>
<svg style="left:1683px;top:927px" width="13" height="15" viewBox="0 0 13 15"><path d="M1,3.2 H12 M4.6,3 V1.2 H8.4 V3" fill="none" stroke="#dcdcdc" stroke-width="1.2"/><path d="M2.2,4.4 V13.8 H10.8 V4.4" fill="none" stroke="#dcdcdc" stroke-width="1.2"/><path d="M4.7,5.5 V12.4 M6.5,5.5 V12.4 M8.3,5.5 V12.4" stroke="#dcdcdc" stroke-width="1"/></svg>
<svg style="left:1467px;top:843.6px" width="72" height="60" viewBox="0 0 72 60"><path d="M5,49.5 L9.5,39.5 C-3.5,30 -1,9 18,3 C34,-2 47,7 48.5,19.5 C38,18 26.5,24 25,35.5 C24,39.5 25,42.5 27,45.5 C22,47 17,46.5 13,45 Z" fill="#ececec"/>
<circle cx="15" cy="16.5" r="3" fill="#535353"/><circle cx="32.5" cy="16.5" r="3" fill="#535353"/>
<path d="M47,22.5 C59,22.5 68.5,30.5 68.5,40 C68.5,45.5 65.5,50 61,53 L63.5,59 L56,55.5 C53,56.8 50,57.3 47,57.3 C35,57.3 26.5,49.5 26.5,40 C26.5,30.5 35,22.5 47,22.5 Z" fill="#ececec" stroke="#4a4a4a" stroke-width="0.8"/>
<circle cx="40" cy="33.5" r="2.5" fill="#535353"/><circle cx="54.5" cy="33.5" r="2.5" fill="#535353"/></svg>
<div class="t" style="left:1543px;top:850px;font-size:42.5px;line-height:52px;height:52px;color:#fdfdfd;font-weight:400;letter-spacing:0px;">野鹿志</div>
</body>
</html>
